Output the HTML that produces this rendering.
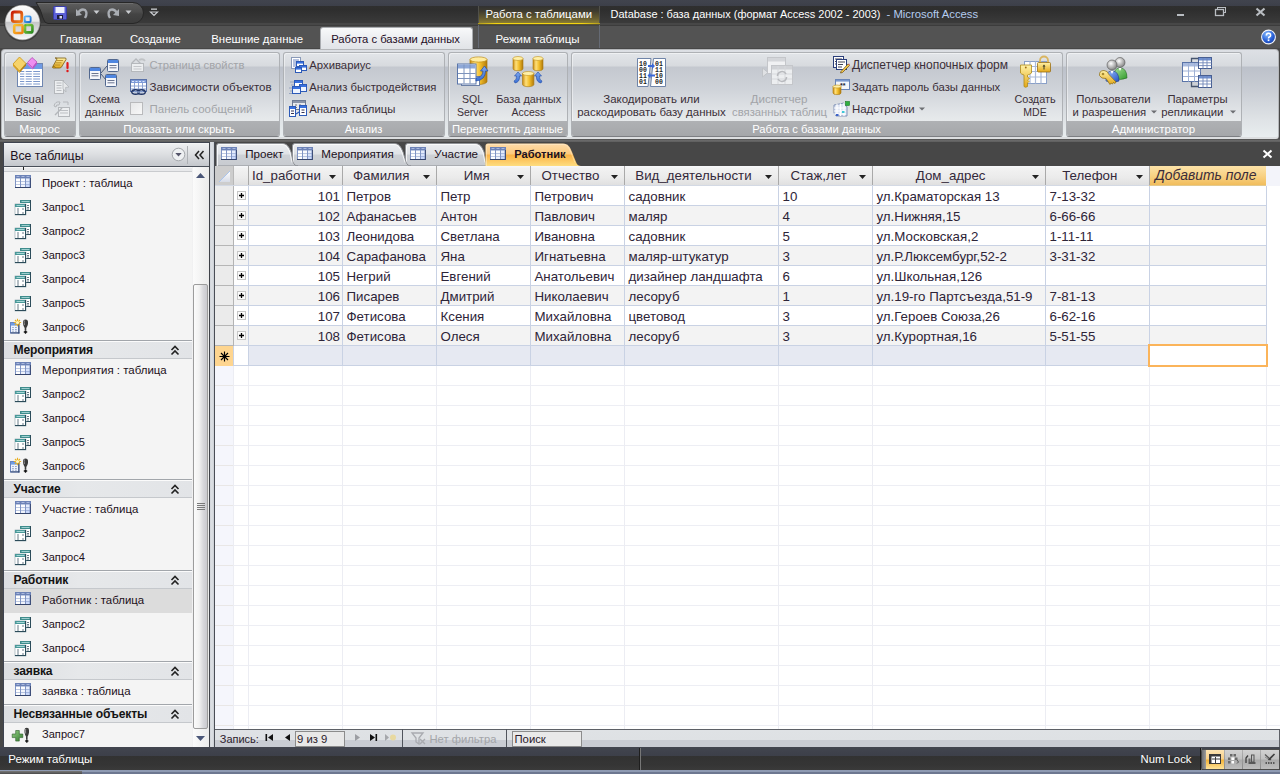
<!DOCTYPE html>
<html><head><meta charset="utf-8">
<style>
*{box-sizing:border-box;margin:0;padding:0}
html,body{width:1280px;height:774px;overflow:hidden;background:#474747;font-family:"Liberation Sans",sans-serif;font-size:11.3px;color:#3a3a3a}
.a{position:absolute;white-space:nowrap}
svg.a{overflow:visible}
</style></head><body>
<div class="a" style="left:0px;top:0px;width:1280px;height:25px;background:linear-gradient(#41444e 0,#3d404a 5.5px,#2f2f2f 6px,#2e2e2e 10px,#3a3a3a 22.5px,#474747 23px,#474747 25px)"></div>
<div class="a" style="left:0px;top:25px;width:1280px;height:24px;background:linear-gradient(#3c3c3c 0,#3c3c3c 1px,#535353 1px,#535353 23px,#474747 23px)"></div>
<div class="a" style="left:478px;top:6px;width:122px;height:18px;background:linear-gradient(#313131 0,#3e3b2e 5px,#6a6030 13px,#8a7c34 17px);border-left:1px solid #50504a;border-right:1px solid #50504a"></div>
<div class="a" style="left:478px;top:23px;width:122px;height:1px;background:linear-gradient(90deg,#b09a20,#f4d410 15%,#f4d410 85%,#b09a20)"></div>
<div class="a" style="left:478px;top:24px;width:122px;height:1px;background:#5a5430"></div>
<div class="a" style="left:478px;top:25px;width:122px;height:23px;background:linear-gradient(#454545 0,#454545 1px,#525252 1px);border-left:1px solid #656a74;border-right:1px solid #656a74"></div>
<div class="a" style="left:485.5px;top:9.40px;font-size:11.33px;line-height:11.33px;color:#fff;font-weight:400;">Работа с таблицами</div>
<div class="a" style="left:610.6px;top:8.72px;font-size:10.96px;line-height:10.96px;color:#fff;font-weight:400;">Database : база данных (формат Access 2002 - 2003)</div>
<div class="a" style="left:886.5px;top:8.51px;font-size:11.2px;line-height:11.2px;color:#b4ccef;font-weight:400;">-</div>
<div class="a" style="left:893.4px;top:9.43px;font-size:11.3px;line-height:11.3px;color:#b4ccef;font-weight:400;">Microsoft Access</div>
<div class="a" style="left:1177px;top:14px;width:7px;height:2px;background:#b9bdc2"></div>
<svg class="a" style="left:1214px;top:7px" width="13" height="10" viewBox="0 0 13 10"><rect x="3.5" y="0.5" width="8" height="5" fill="none" stroke="#b9bdc2"/><rect x="1.5" y="2.5" width="8" height="6" fill="#303030" stroke="#b9bdc2" stroke-width="1.3"/></svg>
<svg class="a" style="left:1255px;top:7px" width="11" height="10" viewBox="0 0 11 10"><path d="M1.5 1.5 L9.5 8.5 M9.5 1.5 L1.5 8.5" stroke="#b9bdc2" stroke-width="2.2"/></svg>
<svg class="a" style="left:0;top:0" width="150" height="26" viewBox="0 0 150 26"><defs><linearGradient id="qat" x1="0" y1="0" x2="0" y2="1"><stop offset="0" stop-color="#5e5e5e"/><stop offset=".45" stop-color="#4d4d4d"/><stop offset=".55" stop-color="#444"/><stop offset="1" stop-color="#3b3b3b"/></linearGradient></defs><path d="M36 2.5 H133 A10.5 10.5 0 0 1 133 23.5 H48 Q44.5 23.5 43 18 Q41 9 36 2.5Z" fill="url(#qat)" stroke="#272727" stroke-width="1"/><path d="M38 3.5 H133" stroke="#6e6e6e" stroke-width="1"/></svg>
<svg class="a" style="left:53px;top:6px" width="14" height="14" viewBox="0 0 14 14"><rect x="0.5" y="0.5" width="13" height="13" rx="1" fill="#5b5fd6" stroke="#3a3ea8"/><rect x="2.5" y="1" width="9" height="6" fill="#eef0ff"/><rect x="4" y="9" width="6" height="4" fill="#1e1e40"/><rect x="6.5" y="10" width="2.5" height="2.5" fill="#dde"/></svg>
<svg class="a" style="left:75px;top:6px" width="14" height="14" viewBox="0 0 14 14"><path d="M3 7 Q6 2 10 4 Q13 7 10 12" fill="none" stroke="#a9adb3" stroke-width="2.4"/><path d="M1 3 L1 10 L7 9 Z" fill="#a9adb3"/></svg>
<svg class="a" style="left:93px;top:10px" width="7" height="5" viewBox="0 0 7 5"><path d="M0.5 0.5 H6.5 L3.5 4 Z" fill="#c9ccd0"/></svg>
<svg class="a" style="left:106px;top:6px" width="14" height="14" viewBox="0 0 14 14"><path d="M11 7 Q8 2 4 4 Q1 7 4 12" fill="none" stroke="#a9adb3" stroke-width="2.4"/><path d="M13 3 L13 10 L7 9 Z" fill="#a9adb3"/></svg>
<svg class="a" style="left:125px;top:10px" width="7" height="5" viewBox="0 0 7 5"><path d="M0.5 0.5 H6.5 L3.5 4 Z" fill="#c9ccd0"/></svg>
<svg class="a" style="left:150px;top:8px" width="8" height="9" viewBox="0 0 8 9"><rect x="1" y="0.5" width="6" height="1.3" fill="#c9ccd0"/><path d="M0.5 4 H7.5 L4 7.5 Z" fill="none" stroke="#c9ccd0" stroke-width="1.2"/></svg>
<svg class="a" style="left:0px;top:0px" width="48" height="48" viewBox="0 0 48 48">
<defs><linearGradient id="ob" x1="0" y1="0" x2="0" y2="1"><stop offset="0" stop-color="#fcfcfc"/><stop offset=".46" stop-color="#e9e9ea"/><stop offset=".5" stop-color="#c6c7c9"/><stop offset=".75" stop-color="#dcdddf"/><stop offset="1" stop-color="#fafafa"/></linearGradient>
<linearGradient id="lr" x1="0" y1="0" x2="1" y2="1"><stop offset="0" stop-color="#c81e08"/><stop offset="1" stop-color="#f08a1a"/></linearGradient>
<linearGradient id="ly" x1="0" y1="0" x2="1" y2="1"><stop offset="0" stop-color="#f8c030"/><stop offset="1" stop-color="#f08010"/></linearGradient>
<linearGradient id="lg" x1="0" y1="0" x2="1" y2="1"><stop offset="0" stop-color="#8cd040"/><stop offset="1" stop-color="#2a8a20"/></linearGradient>
<linearGradient id="lb" x1="0" y1="0" x2="1" y2="1"><stop offset="0" stop-color="#60b8f8"/><stop offset="1" stop-color="#1a6ad0"/></linearGradient></defs>
<circle cx="22.5" cy="23" r="18.6" fill="#222" opacity=".45"/>
<circle cx="22.5" cy="22.5" r="17.8" fill="#8e8e8e"/>
<circle cx="22.5" cy="22.5" r="17" fill="url(#ob)"/>
<rect x="12.2" y="12" width="9.6" height="9.6" rx="2" fill="none" stroke="url(#lr)" stroke-width="2.8"/>
<rect x="24.6" y="16.4" width="6" height="5.6" rx="1" fill="none" stroke="url(#lb)" stroke-width="1.9"/>
<rect x="14.2" y="25" width="8.4" height="8" rx="1.5" fill="none" stroke="url(#ly)" stroke-width="2.6"/>
<rect x="25" y="25" width="7.4" height="7.4" rx="1.5" fill="none" stroke="url(#lg)" stroke-width="2.6"/>
<circle cx="21.5" cy="21.5" r="1.1" fill="#f07020"/><circle cx="25.5" cy="21.5" r="1.1" fill="#3a8ae0"/><circle cx="21.5" cy="25.3" r="1.1" fill="#f8b030"/><circle cx="25.5" cy="25.3" r="1.1" fill="#5ab030"/>
</svg>
<div class="a" style="left:60px;top:33.66px;font-size:11.03px;line-height:11.03px;color:#fff;font-weight:400;">Главная</div>
<div class="a" style="left:130px;top:34.47px;font-size:11.25px;line-height:11.25px;color:#fff;font-weight:400;">Создание</div>
<div class="a" style="left:211.25px;top:34.34px;font-size:11.41px;line-height:11.41px;color:#fff;font-weight:400;">Внешние данные</div>
<div class="a" style="left:320px;top:27px;width:153px;height:24px;border:1px solid #a9acb0;border-bottom:none;border-radius:3px 3px 0 0;background:linear-gradient(#f8f9fa,#e8eaed 60%,#dfe2e6)"></div>
<div class="a" style="left:331.25px;top:34.48px;font-size:11.24px;line-height:11.24px;color:#1e0c26;font-weight:400;">Работа с базами данных</div>
<div class="a" style="left:495.5px;top:34.28px;font-size:11.47px;line-height:11.47px;color:#fff;font-weight:400;">Режим таблицы</div>
<svg class="a" style="left:1260px;top:29px" width="17" height="17" viewBox="0 0 17 17">
<defs><radialGradient id="hb" cx="40%" cy="30%" r="75%"><stop offset="0" stop-color="#8cc0ff"/><stop offset=".6" stop-color="#2a62d8"/><stop offset="1" stop-color="#1840a8"/></radialGradient></defs>
<circle cx="8.5" cy="8" r="6.9" fill="url(#hb)" stroke="#f4f6fa" stroke-width="1.1"/>
<path d="M6.4 6.5 Q6.4 4.3 8.5 4.3 Q10.6 4.3 10.6 6.2 Q10.6 7.4 9.3 8 Q8.5 8.5 8.5 9.4" fill="none" stroke="#fff" stroke-width="1.5"/><rect x="7.7" y="10.4" width="1.7" height="1.7" fill="#fff"/>
</svg>
<div class="a" style="left:1px;top:49px;width:1278px;height:90px;border:1px solid #b5b7ba;border-bottom:2px solid #dcdee0;border-radius:4px 4px 3px 3px;background:linear-gradient(#dde0e5 0,#d3d7dd 16px,#bcc1ca 17px,#c9cdd4 40px,#dfe3e6 70px,#e9eef0 88px)"></div>
<div class="a" style="left:0px;top:139px;width:1280px;height:1px;background:#565656"></div>
<div class="a" style="left:0px;top:140px;width:1280px;height:2px;background:linear-gradient(#6c6c6c,#5e5e5e)"></div>
<div class="a" style="left:4px;top:52px;width:72px;height:85px;border:1px solid #aeb1b5;border-bottom-color:#7d7f83;border-radius:3px;background:linear-gradient(#e2e5e9 0,#d7dade 13px,#c4c8cf 14px,#ced2d8 35px,#e2e5e8 60px,#e7eaec 68px);box-shadow:inset 1px 1px 0 rgba(255,255,255,.45)"></div>
<div class="a" style="left:5px;top:121px;width:70px;height:15px;background:linear-gradient(#afb1b4,#a5a7aa);border-radius:0 0 2px 2px"></div>
<div class="a" style="left:-110.5px;width:300px;text-align:center;top:124.00px;font-size:11.81px;line-height:11.81px;color:#fff;font-weight:400;">Макрос</div>
<div class="a" style="left:79px;top:52px;width:201px;height:85px;border:1px solid #aeb1b5;border-bottom-color:#7d7f83;border-radius:3px;background:linear-gradient(#e2e5e9 0,#d7dade 13px,#c4c8cf 14px,#ced2d8 35px,#e2e5e8 60px,#e7eaec 68px);box-shadow:inset 1px 1px 0 rgba(255,255,255,.45)"></div>
<div class="a" style="left:80px;top:121px;width:199px;height:15px;background:linear-gradient(#afb1b4,#a5a7aa);border-radius:0 0 2px 2px"></div>
<div class="a" style="left:29.0px;width:300px;text-align:center;top:124.24px;font-size:11.52px;line-height:11.52px;color:#fff;font-weight:400;">Показать или скрыть</div>
<div class="a" style="left:283px;top:52px;width:162px;height:85px;border:1px solid #aeb1b5;border-bottom-color:#7d7f83;border-radius:3px;background:linear-gradient(#e2e5e9 0,#d7dade 13px,#c4c8cf 14px,#ced2d8 35px,#e2e5e8 60px,#e7eaec 68px);box-shadow:inset 1px 1px 0 rgba(255,255,255,.45)"></div>
<div class="a" style="left:284px;top:121px;width:160px;height:15px;background:linear-gradient(#afb1b4,#a5a7aa);border-radius:0 0 2px 2px"></div>
<div class="a" style="left:213.5px;width:300px;text-align:center;top:123.54px;font-size:11.17px;line-height:11.17px;color:#fff;font-weight:400;">Анализ</div>
<div class="a" style="left:448px;top:52px;width:120px;height:85px;border:1px solid #aeb1b5;border-bottom-color:#7d7f83;border-radius:3px;background:linear-gradient(#e2e5e9 0,#d7dade 13px,#c4c8cf 14px,#ced2d8 35px,#e2e5e8 60px,#e7eaec 68px);box-shadow:inset 1px 1px 0 rgba(255,255,255,.45)"></div>
<div class="a" style="left:449px;top:121px;width:118px;height:15px;background:linear-gradient(#afb1b4,#a5a7aa);border-radius:0 0 2px 2px"></div>
<div class="a" style="left:357.5px;width:300px;text-align:center;top:123.51px;font-size:11.21px;line-height:11.21px;color:#fff;font-weight:400;">Переместить данные</div>
<div class="a" style="left:571px;top:52px;width:492px;height:85px;border:1px solid #aeb1b5;border-bottom-color:#7d7f83;border-radius:3px;background:linear-gradient(#e2e5e9 0,#d7dade 13px,#c4c8cf 14px,#ced2d8 35px,#e2e5e8 60px,#e7eaec 68px);box-shadow:inset 1px 1px 0 rgba(255,255,255,.45)"></div>
<div class="a" style="left:572px;top:121px;width:490px;height:15px;background:linear-gradient(#afb1b4,#a5a7aa);border-radius:0 0 2px 2px"></div>
<div class="a" style="left:666.5px;width:300px;text-align:center;top:124.48px;font-size:11.24px;line-height:11.24px;color:#fff;font-weight:400;">Работа с базами данных</div>
<div class="a" style="left:1066px;top:52px;width:176px;height:85px;border:1px solid #aeb1b5;border-bottom-color:#7d7f83;border-radius:3px;background:linear-gradient(#e2e5e9 0,#d7dade 13px,#c4c8cf 14px,#ced2d8 35px,#e2e5e8 60px,#e7eaec 68px);box-shadow:inset 1px 1px 0 rgba(255,255,255,.45)"></div>
<div class="a" style="left:1067px;top:121px;width:174px;height:15px;background:linear-gradient(#afb1b4,#a5a7aa);border-radius:0 0 2px 2px"></div>
<div class="a" style="left:1003.5px;width:300px;text-align:center;top:124.20px;font-size:11.57px;line-height:11.57px;color:#fff;font-weight:400;">Администратор</div>
<div class="a" style="left:-121.6px;width:300px;text-align:center;top:94.37px;font-size:11.37px;line-height:11.37px;color:#3b2f38;font-weight:400;">Visual</div>
<div class="a" style="left:-121.6px;width:300px;text-align:center;top:107.08px;font-size:10.53px;line-height:10.53px;color:#3b2f38;font-weight:400;">Basic</div>
<div class="a" style="left:-46px;width:300px;text-align:center;top:94.11px;font-size:10.5px;line-height:10.5px;color:#3b2f38;font-weight:400;">Схема</div>
<div class="a" style="left:-45.400000000000006px;width:300px;text-align:center;top:107.40px;font-size:11.33px;line-height:11.33px;color:#3b2f38;font-weight:400;">данных</div>
<div class="a" style="left:149.5px;top:60.46px;font-size:11.26px;line-height:11.26px;color:#a2a4a8;font-weight:400;">Страница свойств</div>
<div class="a" style="left:149.5px;top:82.23px;font-size:11.53px;line-height:11.53px;color:#3b2f38;font-weight:400;">Зависимости объектов</div>
<div class="a" style="left:149.5px;top:104.27px;font-size:11.49px;line-height:11.49px;color:#a2a4a8;font-weight:400;">Панель сообщений</div>
<div class="a" style="left:309.3px;top:60.41px;font-size:11.32px;line-height:11.32px;color:#3b2f38;font-weight:400;">Архивариус</div>
<div class="a" style="left:309.3px;top:82.45px;font-size:11.28px;line-height:11.28px;color:#3b2f38;font-weight:400;">Анализ быстродействия</div>
<div class="a" style="left:309.3px;top:104.43px;font-size:11.3px;line-height:11.3px;color:#3b2f38;font-weight:400;">Анализ таблицы</div>
<div class="a" style="left:322.5px;width:300px;text-align:center;top:94.11px;font-size:10.5px;line-height:10.5px;color:#3b2f38;font-weight:400;">SQL</div>
<div class="a" style="left:322.5px;width:300px;text-align:center;top:107.08px;font-size:10.53px;line-height:10.53px;color:#3b2f38;font-weight:400;">Server</div>
<div class="a" style="left:378.70000000000005px;width:300px;text-align:center;top:93.76px;font-size:10.91px;line-height:10.91px;color:#3b2f38;font-weight:400;">База данных</div>
<div class="a" style="left:378.4px;width:300px;text-align:center;top:107.11px;font-size:10.5px;line-height:10.5px;color:#3b2f38;font-weight:400;">Access</div>
<div class="a" style="left:501.5px;width:300px;text-align:center;top:94.28px;font-size:11.48px;line-height:11.48px;color:#3b2f38;font-weight:400;">Закодировать или</div>
<div class="a" style="left:501.5px;width:300px;text-align:center;top:107.27px;font-size:11.49px;line-height:11.49px;color:#3b2f38;font-weight:400;">раскодировать базу данных</div>
<div class="a" style="left:629px;width:300px;text-align:center;top:93.13px;font-size:11.65px;line-height:11.65px;color:#a2a4a8;font-weight:400;">Диспетчер</div>
<div class="a" style="left:629.5px;width:300px;text-align:center;top:107.45px;font-size:11.28px;line-height:11.28px;color:#a2a4a8;font-weight:400;">связанных таблиц</div>
<div class="a" style="left:852px;top:58.82px;font-size:12.02px;line-height:12.02px;color:#3b2f38;font-weight:400;">Диспетчер кнопочных форм</div>
<div class="a" style="left:852px;top:82.42px;font-size:11.31px;line-height:11.31px;color:#3b2f38;font-weight:400;">Задать пароль базы данных</div>
<div class="a" style="left:852px;top:104.34px;font-size:11.41px;line-height:11.41px;color:#3b2f38;font-weight:400;">Надстройки</div>
<svg class="a" style="left:919px;top:107px" width="6" height="4" viewBox="0 0 6 4"><path d="M0 0.5 H6 L3 3.5Z" fill="#6d6f73"/></svg>
<div class="a" style="left:885px;width:300px;text-align:center;top:93.81px;font-size:10.85px;line-height:10.85px;color:#3b2f38;font-weight:400;">Создать</div>
<div class="a" style="left:885px;width:300px;text-align:center;top:107.11px;font-size:10.5px;line-height:10.5px;color:#3b2f38;font-weight:400;">MDE</div>
<div class="a" style="left:963.4000000000001px;width:300px;text-align:center;top:94.36px;font-size:11.38px;line-height:11.38px;color:#3b2f38;font-weight:400;">Пользователи</div>
<div class="a" style="left:1072.5px;top:107.43px;font-size:11.3px;line-height:11.3px;color:#3b2f38;font-weight:400;">и разрешения</div>
<svg class="a" style="left:1151px;top:110px" width="6" height="4" viewBox="0 0 6 4"><path d="M0 0.5 H6 L3 3.5Z" fill="#6d6f73"/></svg>
<div class="a" style="left:1047.5px;width:300px;text-align:center;top:94.46px;font-size:11.26px;line-height:11.26px;color:#3b2f38;font-weight:400;">Параметры</div>
<div class="a" style="left:1161.25px;top:107.43px;font-size:11.3px;line-height:11.3px;color:#3b2f38;font-weight:400;">репликации</div>
<svg class="a" style="left:1230px;top:110px" width="6" height="4" viewBox="0 0 6 4"><path d="M0 0.5 H6 L3 3.5Z" fill="#6d6f73"/></svg>
<div class="a" style="left:3px;top:142px;width:206px;height:606px;background:#3f4450"></div>
<div class="a" style="left:4px;top:143px;width:205px;height:604px;background:#f4f4f4"></div>
<div class="a" style="left:4px;top:143px;width:205px;height:24px;background:linear-gradient(#fafafa 0,#eeeff1 1px,#dcdee1 50%,#c4c7cc);border-bottom:1px solid #4a505a"></div>
<div class="a" style="left:10.3px;top:149.61px;font-size:12.27px;line-height:12.27px;color:#1c1020;font-weight:400;">Все таблицы</div>
<svg class="a" style="left:171px;top:147px" width="15" height="15" viewBox="0 0 15 15"><circle cx="7.5" cy="7.5" r="6.3" fill="#eef0f2" stroke="#a4a7ab" stroke-width="1"/><path d="M4.3 6 H10.7 L7.5 9.5Z" fill="#55556a"/></svg>
<div class="a" style="left:187px;top:146px;width:1px;height:18px;background:#aeb1b5"></div>
<svg class="a" style="left:194px;top:150px" width="11" height="10" viewBox="0 0 11 10"><path d="M5 1 L1.5 5 L5 9 M9.5 1 L6 5 L9.5 9" fill="none" stroke="#222" stroke-width="1.5"/></svg>
<div class="a" style="left:4px;top:167px;width:188px;height:5px;background:linear-gradient(#f8f8f8 0,#f8f8f8 1px,#e8e9eb 1px);border-bottom:1px solid #c9cbce"></div>
<div class="a" style="left:23px;top:167px;width:1px;height:3px;background:#222"></div>
<svg class="a" style="left:15px;top:175px" width="16" height="13" viewBox="0 0 16 13"><rect x="0" y="0" width="16" height="13" fill="#7f94c4"/><rect x="0" y="12" width="16" height="1" fill="#34446c"/><rect x="15" y="1" width="1" height="12" fill="#3e4f7a"/><rect x="0" y="0" width="16" height="3" fill="#6c82b6"/><path d="M1.5 1.5 H4.5 M6.5 1.5 H9.5 M11.5 1.5 H14.5" stroke="#a9b8de" stroke-width="1"/><rect x="1" y="3.5" width="4" height="2.5" fill="#fff"/><rect x="6" y="3.5" width="4" height="2.5" fill="#fafbfe"/><rect x="11" y="3.5" width="3.5" height="2.5" fill="#e4ebfb"/><rect x="1" y="6.5" width="4" height="2.5" fill="#fff"/><rect x="6" y="6.5" width="4" height="2.5" fill="#f2f5fc"/><rect x="11" y="6.5" width="3.5" height="2.5" fill="#d8e3fb"/><rect x="1" y="9.5" width="4" height="2.5" fill="#fff"/><rect x="6" y="9.5" width="4" height="2.5" fill="#eef2fb"/><rect x="11" y="9.5" width="3.5" height="2.5" fill="#c9d8fa"/></svg>
<div class="a" style="left:42px;top:178.30px;font-size:11.45px;line-height:11.45px;color:#1c1020;font-weight:400;">Проект : таблица</div>
<svg class="a" style="left:15px;top:200px" width="16" height="15" viewBox="0 0 16 15"><rect x="5" y="0" width="11" height="11" fill="#fff"/><rect x="5" y="0" width="11" height="3" fill="#3f8c8c"/><path d="M6.5 1.5 H14.5" stroke="#9fd0d0"/><rect x="15" y="0" width="1" height="11" fill="#2c4c5a"/><rect x="5" y="10" width="11" height="1" fill="#2c4c5a"/><path d="M12 5.5 H14 M12 7.5 H14 M12 9 H14" stroke="#6a7c88"/><rect x="0" y="4" width="11" height="11" fill="#fff" stroke="#8aa0a8" stroke-width=".6"/><rect x="0" y="4" width="11" height="3" fill="#4a9898"/><path d="M1.5 5.5 H9.5" stroke="#a8d8d8"/><rect x="10" y="4" width="1" height="11" fill="#2c4c5a"/><rect x="0" y="14" width="11" height="1" fill="#2c4c5a"/><path d="M2 9 H4 M2 11 H4 M2 13 H4 M7 9 H9 M7 13 H9" stroke="#6a7c88"/></svg>
<div class="a" style="left:42px;top:201.60px;font-size:11.1px;line-height:11.1px;color:#1c1020;font-weight:400;">Запрос1</div>
<svg class="a" style="left:15px;top:224px" width="16" height="15" viewBox="0 0 16 15"><rect x="5" y="0" width="11" height="11" fill="#fff"/><rect x="5" y="0" width="11" height="3" fill="#3f8c8c"/><path d="M6.5 1.5 H14.5" stroke="#9fd0d0"/><rect x="15" y="0" width="1" height="11" fill="#2c4c5a"/><rect x="5" y="10" width="11" height="1" fill="#2c4c5a"/><path d="M12 5.5 H14 M12 7.5 H14 M12 9 H14" stroke="#6a7c88"/><rect x="0" y="4" width="11" height="11" fill="#fff" stroke="#8aa0a8" stroke-width=".6"/><rect x="0" y="4" width="11" height="3" fill="#4a9898"/><path d="M1.5 5.5 H9.5" stroke="#a8d8d8"/><rect x="10" y="4" width="1" height="11" fill="#2c4c5a"/><rect x="0" y="14" width="11" height="1" fill="#2c4c5a"/><path d="M2 9 H4 M2 11 H4 M2 13 H4 M7 9 H9 M7 13 H9" stroke="#6a7c88"/></svg>
<div class="a" style="left:42px;top:225.60px;font-size:11.1px;line-height:11.1px;color:#1c1020;font-weight:400;">Запрос2</div>
<svg class="a" style="left:15px;top:248px" width="16" height="15" viewBox="0 0 16 15"><rect x="5" y="0" width="11" height="11" fill="#fff"/><rect x="5" y="0" width="11" height="3" fill="#3f8c8c"/><path d="M6.5 1.5 H14.5" stroke="#9fd0d0"/><rect x="15" y="0" width="1" height="11" fill="#2c4c5a"/><rect x="5" y="10" width="11" height="1" fill="#2c4c5a"/><path d="M12 5.5 H14 M12 7.5 H14 M12 9 H14" stroke="#6a7c88"/><rect x="0" y="4" width="11" height="11" fill="#fff" stroke="#8aa0a8" stroke-width=".6"/><rect x="0" y="4" width="11" height="3" fill="#4a9898"/><path d="M1.5 5.5 H9.5" stroke="#a8d8d8"/><rect x="10" y="4" width="1" height="11" fill="#2c4c5a"/><rect x="0" y="14" width="11" height="1" fill="#2c4c5a"/><path d="M2 9 H4 M2 11 H4 M2 13 H4 M7 9 H9 M7 13 H9" stroke="#6a7c88"/></svg>
<div class="a" style="left:42px;top:249.60px;font-size:11.1px;line-height:11.1px;color:#1c1020;font-weight:400;">Запрос3</div>
<svg class="a" style="left:15px;top:272px" width="16" height="15" viewBox="0 0 16 15"><rect x="5" y="0" width="11" height="11" fill="#fff"/><rect x="5" y="0" width="11" height="3" fill="#3f8c8c"/><path d="M6.5 1.5 H14.5" stroke="#9fd0d0"/><rect x="15" y="0" width="1" height="11" fill="#2c4c5a"/><rect x="5" y="10" width="11" height="1" fill="#2c4c5a"/><path d="M12 5.5 H14 M12 7.5 H14 M12 9 H14" stroke="#6a7c88"/><rect x="0" y="4" width="11" height="11" fill="#fff" stroke="#8aa0a8" stroke-width=".6"/><rect x="0" y="4" width="11" height="3" fill="#4a9898"/><path d="M1.5 5.5 H9.5" stroke="#a8d8d8"/><rect x="10" y="4" width="1" height="11" fill="#2c4c5a"/><rect x="0" y="14" width="11" height="1" fill="#2c4c5a"/><path d="M2 9 H4 M2 11 H4 M2 13 H4 M7 9 H9 M7 13 H9" stroke="#6a7c88"/></svg>
<div class="a" style="left:42px;top:273.60px;font-size:11.1px;line-height:11.1px;color:#1c1020;font-weight:400;">Запрос4</div>
<svg class="a" style="left:15px;top:296px" width="16" height="15" viewBox="0 0 16 15"><rect x="5" y="0" width="11" height="11" fill="#fff"/><rect x="5" y="0" width="11" height="3" fill="#3f8c8c"/><path d="M6.5 1.5 H14.5" stroke="#9fd0d0"/><rect x="15" y="0" width="1" height="11" fill="#2c4c5a"/><rect x="5" y="10" width="11" height="1" fill="#2c4c5a"/><path d="M12 5.5 H14 M12 7.5 H14 M12 9 H14" stroke="#6a7c88"/><rect x="0" y="4" width="11" height="11" fill="#fff" stroke="#8aa0a8" stroke-width=".6"/><rect x="0" y="4" width="11" height="3" fill="#4a9898"/><path d="M1.5 5.5 H9.5" stroke="#a8d8d8"/><rect x="10" y="4" width="1" height="11" fill="#2c4c5a"/><rect x="0" y="14" width="11" height="1" fill="#2c4c5a"/><path d="M2 9 H4 M2 11 H4 M2 13 H4 M7 9 H9 M7 13 H9" stroke="#6a7c88"/></svg>
<div class="a" style="left:42px;top:297.60px;font-size:11.1px;line-height:11.1px;color:#1c1020;font-weight:400;">Запрос5</div>
<svg class="a" style="left:10px;top:318px" width="20" height="16" viewBox="0 0 20 16"><rect x="0.5" y="4.5" width="8.5" height="10.5" fill="#eef3fc" stroke="#6a86c0" stroke-width="1"/><rect x="1" y="5" width="7.5" height="2.6" fill="#6d9ce6"/><rect x="8.3" y="5" width="1" height="10.5" fill="#34466e"/><rect x="0.5" y="14.4" width="9" height="1" fill="#34466e"/><path d="M2.2 9.5 H3.8 M5 9.5 H6.8 M2.2 11.5 H3.8 M5 11.5 H6.8 M2.2 13.2 H3.8 M5 13.2 H6.8" stroke="#95a6c8"/><g stroke="#eab020" stroke-width="1.1"><path d="M7.5 0.8 V8.2 M3.9 4.5 H11.1 M5 2 L10 7 M10 2 L5 7"/></g><circle cx="7.5" cy="4.5" r="1.6" fill="#fff6c0"/><path d="M13 4 Q13 1.5 15.5 1.5 Q18 1.5 18 4 V6 Q17.5 8.5 16.3 10 V12.5 H14.7 V10 Q13.5 8.5 13 6Z" fill="#3a3a3a"/><path d="M14.3 2.5 Q14 4 14.3 7" stroke="#9a9a9a" stroke-width="1"/><path d="M13.8 14 H17.2 M15.5 12.5 V15.8" stroke="#111" stroke-width="1.3"/></svg>
<div class="a" style="left:42px;top:321.60px;font-size:11.1px;line-height:11.1px;color:#1c1020;font-weight:400;">Запрос6</div>
<div class="a" style="left:4px;top:340px;width:188px;height:1px;background:#a2a6ab"></div>
<div class="a" style="left:4px;top:341px;width:188px;height:1px;background:#fbfbfb"></div>
<div class="a" style="left:4px;top:342px;width:188px;height:17px;background:linear-gradient(90deg,#dcdee1,#e6e8ea 40%,#e2e4e7);border-bottom:1px solid #c5c8cc"></div>
<div class="a" style="left:13.5px;top:343.75px;font-size:12.1px;line-height:12.1px;color:#141414;font-weight:700;letter-spacing:-0.15px;">Мероприятия</div>
<svg class="a" style="left:170px;top:345px" width="10" height="11" viewBox="0 0 10 11"><path d="M1.5 5 L5 1.5 L8.5 5 M1.5 9.5 L5 6 L8.5 9.5" fill="none" stroke="#222" stroke-width="1.6"/></svg>
<svg class="a" style="left:15px;top:362px" width="16" height="13" viewBox="0 0 16 13"><rect x="0" y="0" width="16" height="13" fill="#7f94c4"/><rect x="0" y="12" width="16" height="1" fill="#34446c"/><rect x="15" y="1" width="1" height="12" fill="#3e4f7a"/><rect x="0" y="0" width="16" height="3" fill="#6c82b6"/><path d="M1.5 1.5 H4.5 M6.5 1.5 H9.5 M11.5 1.5 H14.5" stroke="#a9b8de" stroke-width="1"/><rect x="1" y="3.5" width="4" height="2.5" fill="#fff"/><rect x="6" y="3.5" width="4" height="2.5" fill="#fafbfe"/><rect x="11" y="3.5" width="3.5" height="2.5" fill="#e4ebfb"/><rect x="1" y="6.5" width="4" height="2.5" fill="#fff"/><rect x="6" y="6.5" width="4" height="2.5" fill="#f2f5fc"/><rect x="11" y="6.5" width="3.5" height="2.5" fill="#d8e3fb"/><rect x="1" y="9.5" width="4" height="2.5" fill="#fff"/><rect x="6" y="9.5" width="4" height="2.5" fill="#eef2fb"/><rect x="11" y="9.5" width="3.5" height="2.5" fill="#c9d8fa"/></svg>
<div class="a" style="left:42px;top:365.30px;font-size:11.45px;line-height:11.45px;color:#1c1020;font-weight:400;">Мероприятия : таблица</div>
<svg class="a" style="left:15px;top:387px" width="16" height="15" viewBox="0 0 16 15"><rect x="5" y="0" width="11" height="11" fill="#fff"/><rect x="5" y="0" width="11" height="3" fill="#3f8c8c"/><path d="M6.5 1.5 H14.5" stroke="#9fd0d0"/><rect x="15" y="0" width="1" height="11" fill="#2c4c5a"/><rect x="5" y="10" width="11" height="1" fill="#2c4c5a"/><path d="M12 5.5 H14 M12 7.5 H14 M12 9 H14" stroke="#6a7c88"/><rect x="0" y="4" width="11" height="11" fill="#fff" stroke="#8aa0a8" stroke-width=".6"/><rect x="0" y="4" width="11" height="3" fill="#4a9898"/><path d="M1.5 5.5 H9.5" stroke="#a8d8d8"/><rect x="10" y="4" width="1" height="11" fill="#2c4c5a"/><rect x="0" y="14" width="11" height="1" fill="#2c4c5a"/><path d="M2 9 H4 M2 11 H4 M2 13 H4 M7 9 H9 M7 13 H9" stroke="#6a7c88"/></svg>
<div class="a" style="left:42px;top:388.60px;font-size:11.1px;line-height:11.1px;color:#1c1020;font-weight:400;">Запрос2</div>
<svg class="a" style="left:15px;top:411px" width="16" height="15" viewBox="0 0 16 15"><rect x="5" y="0" width="11" height="11" fill="#fff"/><rect x="5" y="0" width="11" height="3" fill="#3f8c8c"/><path d="M6.5 1.5 H14.5" stroke="#9fd0d0"/><rect x="15" y="0" width="1" height="11" fill="#2c4c5a"/><rect x="5" y="10" width="11" height="1" fill="#2c4c5a"/><path d="M12 5.5 H14 M12 7.5 H14 M12 9 H14" stroke="#6a7c88"/><rect x="0" y="4" width="11" height="11" fill="#fff" stroke="#8aa0a8" stroke-width=".6"/><rect x="0" y="4" width="11" height="3" fill="#4a9898"/><path d="M1.5 5.5 H9.5" stroke="#a8d8d8"/><rect x="10" y="4" width="1" height="11" fill="#2c4c5a"/><rect x="0" y="14" width="11" height="1" fill="#2c4c5a"/><path d="M2 9 H4 M2 11 H4 M2 13 H4 M7 9 H9 M7 13 H9" stroke="#6a7c88"/></svg>
<div class="a" style="left:42px;top:412.60px;font-size:11.1px;line-height:11.1px;color:#1c1020;font-weight:400;">Запрос4</div>
<svg class="a" style="left:15px;top:435px" width="16" height="15" viewBox="0 0 16 15"><rect x="5" y="0" width="11" height="11" fill="#fff"/><rect x="5" y="0" width="11" height="3" fill="#3f8c8c"/><path d="M6.5 1.5 H14.5" stroke="#9fd0d0"/><rect x="15" y="0" width="1" height="11" fill="#2c4c5a"/><rect x="5" y="10" width="11" height="1" fill="#2c4c5a"/><path d="M12 5.5 H14 M12 7.5 H14 M12 9 H14" stroke="#6a7c88"/><rect x="0" y="4" width="11" height="11" fill="#fff" stroke="#8aa0a8" stroke-width=".6"/><rect x="0" y="4" width="11" height="3" fill="#4a9898"/><path d="M1.5 5.5 H9.5" stroke="#a8d8d8"/><rect x="10" y="4" width="1" height="11" fill="#2c4c5a"/><rect x="0" y="14" width="11" height="1" fill="#2c4c5a"/><path d="M2 9 H4 M2 11 H4 M2 13 H4 M7 9 H9 M7 13 H9" stroke="#6a7c88"/></svg>
<div class="a" style="left:42px;top:436.60px;font-size:11.1px;line-height:11.1px;color:#1c1020;font-weight:400;">Запрос5</div>
<svg class="a" style="left:10px;top:457px" width="20" height="16" viewBox="0 0 20 16"><rect x="0.5" y="4.5" width="8.5" height="10.5" fill="#eef3fc" stroke="#6a86c0" stroke-width="1"/><rect x="1" y="5" width="7.5" height="2.6" fill="#6d9ce6"/><rect x="8.3" y="5" width="1" height="10.5" fill="#34466e"/><rect x="0.5" y="14.4" width="9" height="1" fill="#34466e"/><path d="M2.2 9.5 H3.8 M5 9.5 H6.8 M2.2 11.5 H3.8 M5 11.5 H6.8 M2.2 13.2 H3.8 M5 13.2 H6.8" stroke="#95a6c8"/><g stroke="#eab020" stroke-width="1.1"><path d="M7.5 0.8 V8.2 M3.9 4.5 H11.1 M5 2 L10 7 M10 2 L5 7"/></g><circle cx="7.5" cy="4.5" r="1.6" fill="#fff6c0"/><path d="M13 4 Q13 1.5 15.5 1.5 Q18 1.5 18 4 V6 Q17.5 8.5 16.3 10 V12.5 H14.7 V10 Q13.5 8.5 13 6Z" fill="#3a3a3a"/><path d="M14.3 2.5 Q14 4 14.3 7" stroke="#9a9a9a" stroke-width="1"/><path d="M13.8 14 H17.2 M15.5 12.5 V15.8" stroke="#111" stroke-width="1.3"/></svg>
<div class="a" style="left:42px;top:460.60px;font-size:11.1px;line-height:11.1px;color:#1c1020;font-weight:400;">Запрос6</div>
<div class="a" style="left:4px;top:479px;width:188px;height:1px;background:#a2a6ab"></div>
<div class="a" style="left:4px;top:480px;width:188px;height:1px;background:#fbfbfb"></div>
<div class="a" style="left:4px;top:481px;width:188px;height:17px;background:linear-gradient(90deg,#dcdee1,#e6e8ea 40%,#e2e4e7);border-bottom:1px solid #c5c8cc"></div>
<div class="a" style="left:13.5px;top:482.75px;font-size:12.1px;line-height:12.1px;color:#141414;font-weight:700;letter-spacing:-0.15px;">Участие</div>
<svg class="a" style="left:170px;top:484px" width="10" height="11" viewBox="0 0 10 11"><path d="M1.5 5 L5 1.5 L8.5 5 M1.5 9.5 L5 6 L8.5 9.5" fill="none" stroke="#222" stroke-width="1.6"/></svg>
<svg class="a" style="left:15px;top:501px" width="16" height="13" viewBox="0 0 16 13"><rect x="0" y="0" width="16" height="13" fill="#7f94c4"/><rect x="0" y="12" width="16" height="1" fill="#34446c"/><rect x="15" y="1" width="1" height="12" fill="#3e4f7a"/><rect x="0" y="0" width="16" height="3" fill="#6c82b6"/><path d="M1.5 1.5 H4.5 M6.5 1.5 H9.5 M11.5 1.5 H14.5" stroke="#a9b8de" stroke-width="1"/><rect x="1" y="3.5" width="4" height="2.5" fill="#fff"/><rect x="6" y="3.5" width="4" height="2.5" fill="#fafbfe"/><rect x="11" y="3.5" width="3.5" height="2.5" fill="#e4ebfb"/><rect x="1" y="6.5" width="4" height="2.5" fill="#fff"/><rect x="6" y="6.5" width="4" height="2.5" fill="#f2f5fc"/><rect x="11" y="6.5" width="3.5" height="2.5" fill="#d8e3fb"/><rect x="1" y="9.5" width="4" height="2.5" fill="#fff"/><rect x="6" y="9.5" width="4" height="2.5" fill="#eef2fb"/><rect x="11" y="9.5" width="3.5" height="2.5" fill="#c9d8fa"/></svg>
<div class="a" style="left:42px;top:504.30px;font-size:11.45px;line-height:11.45px;color:#1c1020;font-weight:400;">Участие : таблица</div>
<svg class="a" style="left:15px;top:526px" width="16" height="15" viewBox="0 0 16 15"><rect x="5" y="0" width="11" height="11" fill="#fff"/><rect x="5" y="0" width="11" height="3" fill="#3f8c8c"/><path d="M6.5 1.5 H14.5" stroke="#9fd0d0"/><rect x="15" y="0" width="1" height="11" fill="#2c4c5a"/><rect x="5" y="10" width="11" height="1" fill="#2c4c5a"/><path d="M12 5.5 H14 M12 7.5 H14 M12 9 H14" stroke="#6a7c88"/><rect x="0" y="4" width="11" height="11" fill="#fff" stroke="#8aa0a8" stroke-width=".6"/><rect x="0" y="4" width="11" height="3" fill="#4a9898"/><path d="M1.5 5.5 H9.5" stroke="#a8d8d8"/><rect x="10" y="4" width="1" height="11" fill="#2c4c5a"/><rect x="0" y="14" width="11" height="1" fill="#2c4c5a"/><path d="M2 9 H4 M2 11 H4 M2 13 H4 M7 9 H9 M7 13 H9" stroke="#6a7c88"/></svg>
<div class="a" style="left:42px;top:527.60px;font-size:11.1px;line-height:11.1px;color:#1c1020;font-weight:400;">Запрос2</div>
<svg class="a" style="left:15px;top:550px" width="16" height="15" viewBox="0 0 16 15"><rect x="5" y="0" width="11" height="11" fill="#fff"/><rect x="5" y="0" width="11" height="3" fill="#3f8c8c"/><path d="M6.5 1.5 H14.5" stroke="#9fd0d0"/><rect x="15" y="0" width="1" height="11" fill="#2c4c5a"/><rect x="5" y="10" width="11" height="1" fill="#2c4c5a"/><path d="M12 5.5 H14 M12 7.5 H14 M12 9 H14" stroke="#6a7c88"/><rect x="0" y="4" width="11" height="11" fill="#fff" stroke="#8aa0a8" stroke-width=".6"/><rect x="0" y="4" width="11" height="3" fill="#4a9898"/><path d="M1.5 5.5 H9.5" stroke="#a8d8d8"/><rect x="10" y="4" width="1" height="11" fill="#2c4c5a"/><rect x="0" y="14" width="11" height="1" fill="#2c4c5a"/><path d="M2 9 H4 M2 11 H4 M2 13 H4 M7 9 H9 M7 13 H9" stroke="#6a7c88"/></svg>
<div class="a" style="left:42px;top:551.60px;font-size:11.1px;line-height:11.1px;color:#1c1020;font-weight:400;">Запрос4</div>
<div class="a" style="left:4px;top:570px;width:188px;height:1px;background:#a2a6ab"></div>
<div class="a" style="left:4px;top:571px;width:188px;height:1px;background:#fbfbfb"></div>
<div class="a" style="left:4px;top:572px;width:188px;height:17px;background:linear-gradient(90deg,#dcdee1,#e6e8ea 40%,#e2e4e7);border-bottom:1px solid #c5c8cc"></div>
<div class="a" style="left:13.5px;top:573.75px;font-size:12.1px;line-height:12.1px;color:#141414;font-weight:700;letter-spacing:-0.15px;">Работник</div>
<svg class="a" style="left:170px;top:575px" width="10" height="11" viewBox="0 0 10 11"><path d="M1.5 5 L5 1.5 L8.5 5 M1.5 9.5 L5 6 L8.5 9.5" fill="none" stroke="#222" stroke-width="1.6"/></svg>
<div class="a" style="left:4px;top:589px;width:188px;height:24px;background:#dcdcdc"></div>
<svg class="a" style="left:15px;top:592px" width="16" height="13" viewBox="0 0 16 13"><rect x="0" y="0" width="16" height="13" fill="#7f94c4"/><rect x="0" y="12" width="16" height="1" fill="#34446c"/><rect x="15" y="1" width="1" height="12" fill="#3e4f7a"/><rect x="0" y="0" width="16" height="3" fill="#6c82b6"/><path d="M1.5 1.5 H4.5 M6.5 1.5 H9.5 M11.5 1.5 H14.5" stroke="#a9b8de" stroke-width="1"/><rect x="1" y="3.5" width="4" height="2.5" fill="#fff"/><rect x="6" y="3.5" width="4" height="2.5" fill="#fafbfe"/><rect x="11" y="3.5" width="3.5" height="2.5" fill="#e4ebfb"/><rect x="1" y="6.5" width="4" height="2.5" fill="#fff"/><rect x="6" y="6.5" width="4" height="2.5" fill="#f2f5fc"/><rect x="11" y="6.5" width="3.5" height="2.5" fill="#d8e3fb"/><rect x="1" y="9.5" width="4" height="2.5" fill="#fff"/><rect x="6" y="9.5" width="4" height="2.5" fill="#eef2fb"/><rect x="11" y="9.5" width="3.5" height="2.5" fill="#c9d8fa"/></svg>
<div class="a" style="left:42px;top:595.30px;font-size:11.45px;line-height:11.45px;color:#1c1020;font-weight:400;">Работник : таблица</div>
<svg class="a" style="left:15px;top:617px" width="16" height="15" viewBox="0 0 16 15"><rect x="5" y="0" width="11" height="11" fill="#fff"/><rect x="5" y="0" width="11" height="3" fill="#3f8c8c"/><path d="M6.5 1.5 H14.5" stroke="#9fd0d0"/><rect x="15" y="0" width="1" height="11" fill="#2c4c5a"/><rect x="5" y="10" width="11" height="1" fill="#2c4c5a"/><path d="M12 5.5 H14 M12 7.5 H14 M12 9 H14" stroke="#6a7c88"/><rect x="0" y="4" width="11" height="11" fill="#fff" stroke="#8aa0a8" stroke-width=".6"/><rect x="0" y="4" width="11" height="3" fill="#4a9898"/><path d="M1.5 5.5 H9.5" stroke="#a8d8d8"/><rect x="10" y="4" width="1" height="11" fill="#2c4c5a"/><rect x="0" y="14" width="11" height="1" fill="#2c4c5a"/><path d="M2 9 H4 M2 11 H4 M2 13 H4 M7 9 H9 M7 13 H9" stroke="#6a7c88"/></svg>
<div class="a" style="left:42px;top:618.60px;font-size:11.1px;line-height:11.1px;color:#1c1020;font-weight:400;">Запрос2</div>
<svg class="a" style="left:15px;top:641px" width="16" height="15" viewBox="0 0 16 15"><rect x="5" y="0" width="11" height="11" fill="#fff"/><rect x="5" y="0" width="11" height="3" fill="#3f8c8c"/><path d="M6.5 1.5 H14.5" stroke="#9fd0d0"/><rect x="15" y="0" width="1" height="11" fill="#2c4c5a"/><rect x="5" y="10" width="11" height="1" fill="#2c4c5a"/><path d="M12 5.5 H14 M12 7.5 H14 M12 9 H14" stroke="#6a7c88"/><rect x="0" y="4" width="11" height="11" fill="#fff" stroke="#8aa0a8" stroke-width=".6"/><rect x="0" y="4" width="11" height="3" fill="#4a9898"/><path d="M1.5 5.5 H9.5" stroke="#a8d8d8"/><rect x="10" y="4" width="1" height="11" fill="#2c4c5a"/><rect x="0" y="14" width="11" height="1" fill="#2c4c5a"/><path d="M2 9 H4 M2 11 H4 M2 13 H4 M7 9 H9 M7 13 H9" stroke="#6a7c88"/></svg>
<div class="a" style="left:42px;top:642.60px;font-size:11.1px;line-height:11.1px;color:#1c1020;font-weight:400;">Запрос4</div>
<div class="a" style="left:4px;top:661px;width:188px;height:1px;background:#a2a6ab"></div>
<div class="a" style="left:4px;top:662px;width:188px;height:1px;background:#fbfbfb"></div>
<div class="a" style="left:4px;top:663px;width:188px;height:17px;background:linear-gradient(90deg,#dcdee1,#e6e8ea 40%,#e2e4e7);border-bottom:1px solid #c5c8cc"></div>
<div class="a" style="left:13.5px;top:664.75px;font-size:12.1px;line-height:12.1px;color:#141414;font-weight:700;letter-spacing:-0.15px;">заявка</div>
<svg class="a" style="left:170px;top:666px" width="10" height="11" viewBox="0 0 10 11"><path d="M1.5 5 L5 1.5 L8.5 5 M1.5 9.5 L5 6 L8.5 9.5" fill="none" stroke="#222" stroke-width="1.6"/></svg>
<svg class="a" style="left:15px;top:683px" width="16" height="13" viewBox="0 0 16 13"><rect x="0" y="0" width="16" height="13" fill="#7f94c4"/><rect x="0" y="12" width="16" height="1" fill="#34446c"/><rect x="15" y="1" width="1" height="12" fill="#3e4f7a"/><rect x="0" y="0" width="16" height="3" fill="#6c82b6"/><path d="M1.5 1.5 H4.5 M6.5 1.5 H9.5 M11.5 1.5 H14.5" stroke="#a9b8de" stroke-width="1"/><rect x="1" y="3.5" width="4" height="2.5" fill="#fff"/><rect x="6" y="3.5" width="4" height="2.5" fill="#fafbfe"/><rect x="11" y="3.5" width="3.5" height="2.5" fill="#e4ebfb"/><rect x="1" y="6.5" width="4" height="2.5" fill="#fff"/><rect x="6" y="6.5" width="4" height="2.5" fill="#f2f5fc"/><rect x="11" y="6.5" width="3.5" height="2.5" fill="#d8e3fb"/><rect x="1" y="9.5" width="4" height="2.5" fill="#fff"/><rect x="6" y="9.5" width="4" height="2.5" fill="#eef2fb"/><rect x="11" y="9.5" width="3.5" height="2.5" fill="#c9d8fa"/></svg>
<div class="a" style="left:42px;top:686.30px;font-size:11.45px;line-height:11.45px;color:#1c1020;font-weight:400;">заявка : таблица</div>
<div class="a" style="left:4px;top:704px;width:188px;height:1px;background:#a2a6ab"></div>
<div class="a" style="left:4px;top:705px;width:188px;height:1px;background:#fbfbfb"></div>
<div class="a" style="left:4px;top:706px;width:188px;height:17px;background:linear-gradient(90deg,#dcdee1,#e6e8ea 40%,#e2e4e7);border-bottom:1px solid #c5c8cc"></div>
<div class="a" style="left:13.5px;top:707.75px;font-size:12.1px;line-height:12.1px;color:#141414;font-weight:700;letter-spacing:-0.15px;">Несвязанные объекты</div>
<svg class="a" style="left:170px;top:709px" width="10" height="11" viewBox="0 0 10 11"><path d="M1.5 5 L5 1.5 L8.5 5 M1.5 9.5 L5 6 L8.5 9.5" fill="none" stroke="#222" stroke-width="1.6"/></svg>
<svg class="a" style="left:11.5px;top:727px" width="20" height="16" viewBox="0 0 20 16"><defs><linearGradient id="gpl" x1="0" y1="0" x2="1" y2="1"><stop offset="0" stop-color="#9ad08a"/><stop offset="1" stop-color="#2e7a2a"/></linearGradient></defs><path d="M3.7 3.5 H7.3 V7 H10.8 V10.6 H7.3 V14.1 H3.7 V10.6 H0.2 V7 H3.7Z" fill="url(#gpl)" stroke="#2a5a28" stroke-width=".6"/><path d="M12.5 3 Q12.5 0.8 14.8 0.8 Q17 0.8 17 3 V5.5 Q16.6 8 15.6 9.5 V12.5 H14 V9.5 Q13 8 12.5 5.5Z" fill="#3a3a3a"/><path d="M13.7 2 Q13.4 3.5 13.7 6.5" stroke="#9a9a9a" stroke-width="1"/><path d="M13.2 14 H16.4 M14.8 12.5 V15.8" stroke="#111" stroke-width="1.3"/></svg>
<div class="a" style="left:42px;top:728.60px;font-size:11.1px;line-height:11.1px;color:#1c1020;font-weight:400;">Запрос7</div>
<div class="a" style="left:192px;top:167px;width:17px;height:580px;background:linear-gradient(90deg,#e6e6e8 0,#fbfbfb 1px,#f7f7f7 5px,#ebebeb 17px)"></div>
<svg class="a" style="left:195px;top:172px" width="11" height="7" viewBox="0 0 11 7"><path d="M1 6 L5.5 1 L10 6Z" fill="#4a5678"/></svg>
<svg class="a" style="left:195px;top:735px" width="11" height="7" viewBox="0 0 11 7"><path d="M1 1 L5.5 6 L10 1Z" fill="#4a5678"/></svg>
<div class="a" style="left:193px;top:284px;width:15px;height:445px;border:1px solid #9c9c9c;border-radius:2px;background:linear-gradient(90deg,#fbfbfb,#f1f1f1 40%,#d8d8dc 70%,#c9c9ce)"></div>
<div class="a" style="left:197px;top:503px;width:8px;height:1px;background:#7a7a7a"></div>
<div class="a" style="left:197px;top:505px;width:8px;height:1px;background:#7a7a7a"></div>
<div class="a" style="left:197px;top:507px;width:8px;height:1px;background:#7a7a7a"></div>
<div class="a" style="left:197px;top:509px;width:8px;height:1px;background:#7a7a7a"></div>
<div class="a" style="left:209px;top:142px;width:6px;height:606px;background:linear-gradient(90deg,#3f4249 0,#3f4249 1px,#d2d6dc 1px,#dee1e5 3px,#c9cdd3 5px,#4a4e56 5px,#4a4e56 6px)"></div>
<div class="a" style="left:0px;top:142px;width:3px;height:606px;background:#474747"></div>
<div class="a" style="left:215px;top:142px;width:1065px;height:24px;background:#474747"></div>
<svg class="a" style="left:405px;top:143px" width="87" height="23" viewBox="0 0 87 23"><defs><linearGradient id="tn" x1="0" y1="0" x2="0" y2="1"><stop offset="0" stop-color="#eceef1"/><stop offset=".48" stop-color="#dfe2e6"/><stop offset=".5" stop-color="#cdd1d6"/><stop offset="1" stop-color="#c8cbd0"/></linearGradient></defs><path d="M0.5 23 V3 Q0.5 0.5 3 0.5 H70 C75 0.5 77 4 79 9 L81 19 C82 22 84 23 86 23Z" fill="url(#tn)" stroke="#8e9196" stroke-width="1"/><path d="M1.5 23 V3.5 Q1.5 1.5 3.5 1.5 H70 C74 1.5 76 5 78 9.5 L80 19.5" fill="none" stroke="rgba(255,255,255,.75)" stroke-width="1"/></svg>
<svg class="a" style="left:410px;top:147px" width="16" height="13" viewBox="0 0 16 13"><rect x="0" y="0" width="16" height="13" fill="#7f94c4"/><rect x="0" y="12" width="16" height="1" fill="#34446c"/><rect x="15" y="1" width="1" height="12" fill="#3e4f7a"/><rect x="0" y="0" width="16" height="3" fill="#6c82b6"/><path d="M1.5 1.5 H4.5 M6.5 1.5 H9.5 M11.5 1.5 H14.5" stroke="#a9b8de" stroke-width="1"/><rect x="1" y="3.5" width="4" height="2.5" fill="#fff"/><rect x="6" y="3.5" width="4" height="2.5" fill="#fafbfe"/><rect x="11" y="3.5" width="3.5" height="2.5" fill="#e4ebfb"/><rect x="1" y="6.5" width="4" height="2.5" fill="#fff"/><rect x="6" y="6.5" width="4" height="2.5" fill="#f2f5fc"/><rect x="11" y="6.5" width="3.5" height="2.5" fill="#d8e3fb"/><rect x="1" y="9.5" width="4" height="2.5" fill="#fff"/><rect x="6" y="9.5" width="4" height="2.5" fill="#eef2fb"/><rect x="11" y="9.5" width="3.5" height="2.5" fill="#c9d8fa"/></svg>
<div class="a" style="left:434.2px;top:148.17px;font-size:11.6px;line-height:11.6px;color:#1c1020;font-weight:400;">Участие</div>
<svg class="a" style="left:292px;top:143px" width="120" height="23" viewBox="0 0 120 23"><defs><linearGradient id="tn" x1="0" y1="0" x2="0" y2="1"><stop offset="0" stop-color="#eceef1"/><stop offset=".48" stop-color="#dfe2e6"/><stop offset=".5" stop-color="#cdd1d6"/><stop offset="1" stop-color="#c8cbd0"/></linearGradient></defs><path d="M0.5 23 V3 Q0.5 0.5 3 0.5 H102 C107 0.5 109 4 111 9 L114 19 C115 22 117 23 119 23Z" fill="url(#tn)" stroke="#8e9196" stroke-width="1"/><path d="M1.5 23 V3.5 Q1.5 1.5 3.5 1.5 H102 C106 1.5 108 5 110 9.5 L113 19.5" fill="none" stroke="rgba(255,255,255,.75)" stroke-width="1"/></svg>
<svg class="a" style="left:297px;top:147px" width="16" height="13" viewBox="0 0 16 13"><rect x="0" y="0" width="16" height="13" fill="#7f94c4"/><rect x="0" y="12" width="16" height="1" fill="#34446c"/><rect x="15" y="1" width="1" height="12" fill="#3e4f7a"/><rect x="0" y="0" width="16" height="3" fill="#6c82b6"/><path d="M1.5 1.5 H4.5 M6.5 1.5 H9.5 M11.5 1.5 H14.5" stroke="#a9b8de" stroke-width="1"/><rect x="1" y="3.5" width="4" height="2.5" fill="#fff"/><rect x="6" y="3.5" width="4" height="2.5" fill="#fafbfe"/><rect x="11" y="3.5" width="3.5" height="2.5" fill="#e4ebfb"/><rect x="1" y="6.5" width="4" height="2.5" fill="#fff"/><rect x="6" y="6.5" width="4" height="2.5" fill="#f2f5fc"/><rect x="11" y="6.5" width="3.5" height="2.5" fill="#d8e3fb"/><rect x="1" y="9.5" width="4" height="2.5" fill="#fff"/><rect x="6" y="9.5" width="4" height="2.5" fill="#eef2fb"/><rect x="11" y="9.5" width="3.5" height="2.5" fill="#c9d8fa"/></svg>
<div class="a" style="left:321.2px;top:148.17px;font-size:11.6px;line-height:11.6px;color:#1c1020;font-weight:400;">Мероприятия</div>
<svg class="a" style="left:216px;top:143px" width="83" height="23" viewBox="0 0 83 23"><defs><linearGradient id="tn" x1="0" y1="0" x2="0" y2="1"><stop offset="0" stop-color="#eceef1"/><stop offset=".48" stop-color="#dfe2e6"/><stop offset=".5" stop-color="#cdd1d6"/><stop offset="1" stop-color="#c8cbd0"/></linearGradient></defs><path d="M0.5 23 V3 Q0.5 0.5 3 0.5 H66 C71 0.5 73 4 75 9 L77 19 C78 22 80 23 82 23Z" fill="url(#tn)" stroke="#8e9196" stroke-width="1"/><path d="M1.5 23 V3.5 Q1.5 1.5 3.5 1.5 H66 C70 1.5 72 5 74 9.5 L76 19.5" fill="none" stroke="rgba(255,255,255,.75)" stroke-width="1"/></svg>
<svg class="a" style="left:221px;top:147px" width="16" height="13" viewBox="0 0 16 13"><rect x="0" y="0" width="16" height="13" fill="#7f94c4"/><rect x="0" y="12" width="16" height="1" fill="#34446c"/><rect x="15" y="1" width="1" height="12" fill="#3e4f7a"/><rect x="0" y="0" width="16" height="3" fill="#6c82b6"/><path d="M1.5 1.5 H4.5 M6.5 1.5 H9.5 M11.5 1.5 H14.5" stroke="#a9b8de" stroke-width="1"/><rect x="1" y="3.5" width="4" height="2.5" fill="#fff"/><rect x="6" y="3.5" width="4" height="2.5" fill="#fafbfe"/><rect x="11" y="3.5" width="3.5" height="2.5" fill="#e4ebfb"/><rect x="1" y="6.5" width="4" height="2.5" fill="#fff"/><rect x="6" y="6.5" width="4" height="2.5" fill="#f2f5fc"/><rect x="11" y="6.5" width="3.5" height="2.5" fill="#d8e3fb"/><rect x="1" y="9.5" width="4" height="2.5" fill="#fff"/><rect x="6" y="9.5" width="4" height="2.5" fill="#eef2fb"/><rect x="11" y="9.5" width="3.5" height="2.5" fill="#c9d8fa"/></svg>
<div class="a" style="left:245.2px;top:148.17px;font-size:11.6px;line-height:11.6px;color:#1c1020;font-weight:400;">Проект</div>
<svg class="a" style="left:485px;top:143px" width="97" height="23" viewBox="0 0 97 23"><defs><linearGradient id="ta" x1="0" y1="0" x2="0" y2="1"><stop offset="0" stop-color="#fedcaa"/><stop offset=".48" stop-color="#fcc97c"/><stop offset=".5" stop-color="#fbb244"/><stop offset="1" stop-color="#fedd80"/></linearGradient></defs><path d="M0.5 23 V3 Q0.5 0.5 3 0.5 H78 C83 0.5 85 4 87 9 L91 19 C92 22 94 23 96 23Z" fill="url(#ta)" stroke="none" stroke-width="1"/><path d="M1.5 23 V3.5 Q1.5 1.5 3.5 1.5 H78 C82 1.5 84 5 86 9.5 L90 19.5" fill="none" stroke="rgba(255,240,210,.5)" stroke-width="1"/></svg>
<svg class="a" style="left:490px;top:147px" width="16" height="13" viewBox="0 0 16 13"><rect x="0" y="0" width="16" height="13" fill="#7f94c4"/><rect x="0" y="12" width="16" height="1" fill="#34446c"/><rect x="15" y="1" width="1" height="12" fill="#3e4f7a"/><rect x="0" y="0" width="16" height="3" fill="#6c82b6"/><path d="M1.5 1.5 H4.5 M6.5 1.5 H9.5 M11.5 1.5 H14.5" stroke="#a9b8de" stroke-width="1"/><rect x="1" y="3.5" width="4" height="2.5" fill="#fff"/><rect x="6" y="3.5" width="4" height="2.5" fill="#fafbfe"/><rect x="11" y="3.5" width="3.5" height="2.5" fill="#e4ebfb"/><rect x="1" y="6.5" width="4" height="2.5" fill="#fff"/><rect x="6" y="6.5" width="4" height="2.5" fill="#f2f5fc"/><rect x="11" y="6.5" width="3.5" height="2.5" fill="#d8e3fb"/><rect x="1" y="9.5" width="4" height="2.5" fill="#fff"/><rect x="6" y="9.5" width="4" height="2.5" fill="#eef2fb"/><rect x="11" y="9.5" width="3.5" height="2.5" fill="#c9d8fa"/></svg>
<div class="a" style="left:514.2px;top:148.56px;font-size:11.14px;line-height:11.14px;color:#1a1020;font-weight:700;">Работник</div>
<svg class="a" style="left:1262px;top:149px" width="11" height="10" viewBox="0 0 11 10"><path d="M1.5 1.5 L9.5 8.5 M9.5 1.5 L1.5 8.5" stroke="#fff" stroke-width="2"/></svg>
<div class="a" style="left:215px;top:166px;width:1065px;height:563px;background:#fff"></div>
<div class="a" style="left:215px;top:166px;width:1065px;height:20px;background:#f3f4fa"></div>
<div class="a" style="left:215px;top:166px;width:1051px;height:20px;background:linear-gradient(#f6f7f9 0,#f6f7f9 1px,#f2f2f2 2px,#ebebeb 60%,#e0e0e0);border-bottom:1px solid #d3d9e4"></div>
<div class="a" style="left:215px;top:166px;width:18px;height:19px;background:#cdcdcd"></div>
<svg class="a" style="left:218px;top:170px" width="13" height="13" viewBox="0 0 13 13"><defs><linearGradient id="cg" x1="0" y1="0" x2="0" y2="1"><stop offset="0" stop-color="#ffffff"/><stop offset="1" stop-color="#d6dbe6"/></linearGradient></defs><path d="M12 1 V12 H1 Z" fill="url(#cg)"/><path d="M1 12 L12 1" stroke="#a9c4ec" stroke-width="1"/></svg>
<div class="a" style="left:1149px;top:166px;width:117px;height:20px;background:linear-gradient(#fce3a8,#f8d081 55%,#f1bd5c);border-bottom:1px solid #e3c98e"></div>
<div class="a" style="left:1155px;top:169.23px;font-size:13.9px;line-height:13.9px;color:#3b2c3a;font-weight:400;font-style:italic;">Добавить поле</div>
<div class="a" style="left:342px;top:166px;width:1px;height:19px;background:#a9a9a9"></div>
<div class="a" style="left:252px;top:168.73px;font-size:13.3px;line-height:13.3px;color:#33283a;font-weight:400;">Id_работни</div>
<svg class="a" style="left:329px;top:175px" width="7" height="4" viewBox="0 0 7 4"><path d="M0 0 H7 L3.5 4Z" fill="#222"/></svg>
<div class="a" style="left:436px;top:166px;width:1px;height:19px;background:#a9a9a9"></div>
<div class="a" style="left:353px;top:168.73px;font-size:13.3px;line-height:13.3px;color:#33283a;font-weight:400;">Фамилия</div>
<svg class="a" style="left:423px;top:175px" width="7" height="4" viewBox="0 0 7 4"><path d="M0 0 H7 L3.5 4Z" fill="#222"/></svg>
<div class="a" style="left:530px;top:166px;width:1px;height:19px;background:#a9a9a9"></div>
<div class="a" style="left:463.8px;top:168.73px;font-size:13.3px;line-height:13.3px;color:#33283a;font-weight:400;">Имя</div>
<svg class="a" style="left:517px;top:175px" width="7" height="4" viewBox="0 0 7 4"><path d="M0 0 H7 L3.5 4Z" fill="#222"/></svg>
<div class="a" style="left:624px;top:166px;width:1px;height:19px;background:#a9a9a9"></div>
<div class="a" style="left:541.5px;top:168.73px;font-size:13.3px;line-height:13.3px;color:#33283a;font-weight:400;">Отчество</div>
<svg class="a" style="left:611px;top:175px" width="7" height="4" viewBox="0 0 7 4"><path d="M0 0 H7 L3.5 4Z" fill="#222"/></svg>
<div class="a" style="left:778px;top:166px;width:1px;height:19px;background:#a9a9a9"></div>
<div class="a" style="left:635.3px;top:168.73px;font-size:13.3px;line-height:13.3px;color:#33283a;font-weight:400;">Вид_деятельности</div>
<svg class="a" style="left:765px;top:175px" width="7" height="4" viewBox="0 0 7 4"><path d="M0 0 H7 L3.5 4Z" fill="#222"/></svg>
<div class="a" style="left:872px;top:166px;width:1px;height:19px;background:#a9a9a9"></div>
<div class="a" style="left:790.5px;top:168.73px;font-size:13.3px;line-height:13.3px;color:#33283a;font-weight:400;">Стаж,лет</div>
<svg class="a" style="left:859px;top:175px" width="7" height="4" viewBox="0 0 7 4"><path d="M0 0 H7 L3.5 4Z" fill="#222"/></svg>
<div class="a" style="left:1045px;top:166px;width:1px;height:19px;background:#a9a9a9"></div>
<div class="a" style="left:915.8px;top:168.73px;font-size:13.3px;line-height:13.3px;color:#33283a;font-weight:400;">Дом_адрес</div>
<svg class="a" style="left:1032px;top:175px" width="7" height="4" viewBox="0 0 7 4"><path d="M0 0 H7 L3.5 4Z" fill="#222"/></svg>
<div class="a" style="left:1149px;top:166px;width:1px;height:19px;background:#a9a9a9"></div>
<div class="a" style="left:1062.2px;top:168.73px;font-size:13.3px;line-height:13.3px;color:#33283a;font-weight:400;">Телефон</div>
<svg class="a" style="left:1136px;top:175px" width="7" height="4" viewBox="0 0 7 4"><path d="M0 0 H7 L3.5 4Z" fill="#222"/></svg>
<div class="a" style="left:233px;top:166px;width:1px;height:19px;background:#b8b8b8"></div>
<div class="a" style="left:248px;top:166px;width:1px;height:19px;background:#a9a9a9"></div>
<div class="a" style="left:233px;top:186px;width:1033px;height:20px;background:#ffffff"></div>
<div class="a" style="left:215px;top:186px;width:18px;height:20px;background:#ebebeb;border-bottom:1px solid #b6b6b6"></div>
<div class="a" style="left:233px;top:205px;width:1033px;height:1px;background:#c9d2e4"></div>
<svg class="a" style="left:237px;top:191px" width="9" height="9" viewBox="0 0 9 9"><rect x="0.5" y="0.5" width="8" height="8" fill="#fafafa" stroke="#c6c6c6"/><path d="M2 4.5 H7 M4.5 2 V7" stroke="#000" stroke-width="1.3"/></svg>
<div class="a" style="left:248px;width:92px;text-align:right;top:189.73px;font-size:13.3px;line-height:13.3px;color:#2d2438">101</div>
<div class="a" style="left:346.5px;top:189.73px;font-size:13.3px;line-height:13.3px;color:#2d2438;font-weight:400;">Петров</div>
<div class="a" style="left:440.5px;top:189.73px;font-size:13.3px;line-height:13.3px;color:#2d2438;font-weight:400;">Петр</div>
<div class="a" style="left:534.5px;top:189.73px;font-size:13.3px;line-height:13.3px;color:#2d2438;font-weight:400;">Петрович</div>
<div class="a" style="left:628.5px;top:189.73px;font-size:13.3px;line-height:13.3px;color:#2d2438;font-weight:400;">садовник</div>
<div class="a" style="left:782.5px;top:189.73px;font-size:13.3px;line-height:13.3px;color:#2d2438;font-weight:400;">10</div>
<div class="a" style="left:876.5px;top:189.73px;font-size:13.3px;line-height:13.3px;color:#2d2438;font-weight:400;">ул.Краматорская 13</div>
<div class="a" style="left:1049.5px;top:189.73px;font-size:13.3px;line-height:13.3px;color:#2d2438;font-weight:400;">7-13-32</div>
<div class="a" style="left:233px;top:206px;width:1033px;height:20px;background:#f3f3f3"></div>
<div class="a" style="left:215px;top:206px;width:18px;height:20px;background:#ebebeb;border-bottom:1px solid #b6b6b6"></div>
<div class="a" style="left:233px;top:225px;width:1033px;height:1px;background:#c9d2e4"></div>
<svg class="a" style="left:237px;top:211px" width="9" height="9" viewBox="0 0 9 9"><rect x="0.5" y="0.5" width="8" height="8" fill="#fafafa" stroke="#c6c6c6"/><path d="M2 4.5 H7 M4.5 2 V7" stroke="#000" stroke-width="1.3"/></svg>
<div class="a" style="left:248px;width:92px;text-align:right;top:209.73px;font-size:13.3px;line-height:13.3px;color:#2d2438">102</div>
<div class="a" style="left:346.5px;top:209.73px;font-size:13.3px;line-height:13.3px;color:#2d2438;font-weight:400;">Афанасьев</div>
<div class="a" style="left:440.5px;top:209.73px;font-size:13.3px;line-height:13.3px;color:#2d2438;font-weight:400;">Антон</div>
<div class="a" style="left:534.5px;top:209.73px;font-size:13.3px;line-height:13.3px;color:#2d2438;font-weight:400;">Павлович</div>
<div class="a" style="left:628.5px;top:209.73px;font-size:13.3px;line-height:13.3px;color:#2d2438;font-weight:400;">маляр</div>
<div class="a" style="left:782.5px;top:209.73px;font-size:13.3px;line-height:13.3px;color:#2d2438;font-weight:400;">4</div>
<div class="a" style="left:876.5px;top:209.73px;font-size:13.3px;line-height:13.3px;color:#2d2438;font-weight:400;">ул.Нижняя,15</div>
<div class="a" style="left:1049.5px;top:209.73px;font-size:13.3px;line-height:13.3px;color:#2d2438;font-weight:400;">6-66-66</div>
<div class="a" style="left:233px;top:226px;width:1033px;height:20px;background:#ffffff"></div>
<div class="a" style="left:215px;top:226px;width:18px;height:20px;background:#ebebeb;border-bottom:1px solid #b6b6b6"></div>
<div class="a" style="left:233px;top:245px;width:1033px;height:1px;background:#c9d2e4"></div>
<svg class="a" style="left:237px;top:231px" width="9" height="9" viewBox="0 0 9 9"><rect x="0.5" y="0.5" width="8" height="8" fill="#fafafa" stroke="#c6c6c6"/><path d="M2 4.5 H7 M4.5 2 V7" stroke="#000" stroke-width="1.3"/></svg>
<div class="a" style="left:248px;width:92px;text-align:right;top:229.73px;font-size:13.3px;line-height:13.3px;color:#2d2438">103</div>
<div class="a" style="left:346.5px;top:229.73px;font-size:13.3px;line-height:13.3px;color:#2d2438;font-weight:400;">Леонидова</div>
<div class="a" style="left:440.5px;top:229.73px;font-size:13.3px;line-height:13.3px;color:#2d2438;font-weight:400;">Светлана</div>
<div class="a" style="left:534.5px;top:229.73px;font-size:13.3px;line-height:13.3px;color:#2d2438;font-weight:400;">Ивановна</div>
<div class="a" style="left:628.5px;top:229.73px;font-size:13.3px;line-height:13.3px;color:#2d2438;font-weight:400;">садовник</div>
<div class="a" style="left:782.5px;top:229.73px;font-size:13.3px;line-height:13.3px;color:#2d2438;font-weight:400;">5</div>
<div class="a" style="left:876.5px;top:229.73px;font-size:13.3px;line-height:13.3px;color:#2d2438;font-weight:400;">ул.Московская,2</div>
<div class="a" style="left:1049.5px;top:229.73px;font-size:13.3px;line-height:13.3px;color:#2d2438;font-weight:400;">1-11-11</div>
<div class="a" style="left:233px;top:246px;width:1033px;height:20px;background:#f3f3f3"></div>
<div class="a" style="left:215px;top:246px;width:18px;height:20px;background:#ebebeb;border-bottom:1px solid #b6b6b6"></div>
<div class="a" style="left:233px;top:265px;width:1033px;height:1px;background:#c9d2e4"></div>
<svg class="a" style="left:237px;top:251px" width="9" height="9" viewBox="0 0 9 9"><rect x="0.5" y="0.5" width="8" height="8" fill="#fafafa" stroke="#c6c6c6"/><path d="M2 4.5 H7 M4.5 2 V7" stroke="#000" stroke-width="1.3"/></svg>
<div class="a" style="left:248px;width:92px;text-align:right;top:249.73px;font-size:13.3px;line-height:13.3px;color:#2d2438">104</div>
<div class="a" style="left:346.5px;top:249.73px;font-size:13.3px;line-height:13.3px;color:#2d2438;font-weight:400;">Сарафанова</div>
<div class="a" style="left:440.5px;top:249.73px;font-size:13.3px;line-height:13.3px;color:#2d2438;font-weight:400;">Яна</div>
<div class="a" style="left:534.5px;top:249.73px;font-size:13.3px;line-height:13.3px;color:#2d2438;font-weight:400;">Игнатьевна</div>
<div class="a" style="left:628.5px;top:249.73px;font-size:13.3px;line-height:13.3px;color:#2d2438;font-weight:400;">маляр-штукатур</div>
<div class="a" style="left:782.5px;top:249.73px;font-size:13.3px;line-height:13.3px;color:#2d2438;font-weight:400;">3</div>
<div class="a" style="left:876.5px;top:249.73px;font-size:13.3px;line-height:13.3px;color:#2d2438;font-weight:400;">ул.Р.Люксембург,52-2</div>
<div class="a" style="left:1049.5px;top:249.73px;font-size:13.3px;line-height:13.3px;color:#2d2438;font-weight:400;">3-31-32</div>
<div class="a" style="left:233px;top:266px;width:1033px;height:20px;background:#ffffff"></div>
<div class="a" style="left:215px;top:266px;width:18px;height:20px;background:#ebebeb;border-bottom:1px solid #b6b6b6"></div>
<div class="a" style="left:233px;top:285px;width:1033px;height:1px;background:#c9d2e4"></div>
<svg class="a" style="left:237px;top:271px" width="9" height="9" viewBox="0 0 9 9"><rect x="0.5" y="0.5" width="8" height="8" fill="#fafafa" stroke="#c6c6c6"/><path d="M2 4.5 H7 M4.5 2 V7" stroke="#000" stroke-width="1.3"/></svg>
<div class="a" style="left:248px;width:92px;text-align:right;top:269.73px;font-size:13.3px;line-height:13.3px;color:#2d2438">105</div>
<div class="a" style="left:346.5px;top:269.73px;font-size:13.3px;line-height:13.3px;color:#2d2438;font-weight:400;">Негрий</div>
<div class="a" style="left:440.5px;top:269.73px;font-size:13.3px;line-height:13.3px;color:#2d2438;font-weight:400;">Евгений</div>
<div class="a" style="left:534.5px;top:269.73px;font-size:13.3px;line-height:13.3px;color:#2d2438;font-weight:400;">Анатольевич</div>
<div class="a" style="left:628.5px;top:269.73px;font-size:13.3px;line-height:13.3px;color:#2d2438;font-weight:400;">дизайнер ландшафта</div>
<div class="a" style="left:782.5px;top:269.73px;font-size:13.3px;line-height:13.3px;color:#2d2438;font-weight:400;">6</div>
<div class="a" style="left:876.5px;top:269.73px;font-size:13.3px;line-height:13.3px;color:#2d2438;font-weight:400;">ул.Школьная,126</div>
<div class="a" style="left:233px;top:286px;width:1033px;height:20px;background:#f3f3f3"></div>
<div class="a" style="left:215px;top:286px;width:18px;height:20px;background:#ebebeb;border-bottom:1px solid #b6b6b6"></div>
<div class="a" style="left:233px;top:305px;width:1033px;height:1px;background:#c9d2e4"></div>
<svg class="a" style="left:237px;top:291px" width="9" height="9" viewBox="0 0 9 9"><rect x="0.5" y="0.5" width="8" height="8" fill="#fafafa" stroke="#c6c6c6"/><path d="M2 4.5 H7 M4.5 2 V7" stroke="#000" stroke-width="1.3"/></svg>
<div class="a" style="left:248px;width:92px;text-align:right;top:289.73px;font-size:13.3px;line-height:13.3px;color:#2d2438">106</div>
<div class="a" style="left:346.5px;top:289.73px;font-size:13.3px;line-height:13.3px;color:#2d2438;font-weight:400;">Писарев</div>
<div class="a" style="left:440.5px;top:289.73px;font-size:13.3px;line-height:13.3px;color:#2d2438;font-weight:400;">Дмитрий</div>
<div class="a" style="left:534.5px;top:289.73px;font-size:13.3px;line-height:13.3px;color:#2d2438;font-weight:400;">Николаевич</div>
<div class="a" style="left:628.5px;top:289.73px;font-size:13.3px;line-height:13.3px;color:#2d2438;font-weight:400;">лесоруб</div>
<div class="a" style="left:782.5px;top:289.73px;font-size:13.3px;line-height:13.3px;color:#2d2438;font-weight:400;">1</div>
<div class="a" style="left:876.5px;top:289.73px;font-size:13.3px;line-height:13.3px;color:#2d2438;font-weight:400;">ул.19-го Партсъезда,51-9</div>
<div class="a" style="left:1049.5px;top:289.73px;font-size:13.3px;line-height:13.3px;color:#2d2438;font-weight:400;">7-81-13</div>
<div class="a" style="left:233px;top:306px;width:1033px;height:20px;background:#ffffff"></div>
<div class="a" style="left:215px;top:306px;width:18px;height:20px;background:#ebebeb;border-bottom:1px solid #b6b6b6"></div>
<div class="a" style="left:233px;top:325px;width:1033px;height:1px;background:#c9d2e4"></div>
<svg class="a" style="left:237px;top:311px" width="9" height="9" viewBox="0 0 9 9"><rect x="0.5" y="0.5" width="8" height="8" fill="#fafafa" stroke="#c6c6c6"/><path d="M2 4.5 H7 M4.5 2 V7" stroke="#000" stroke-width="1.3"/></svg>
<div class="a" style="left:248px;width:92px;text-align:right;top:309.73px;font-size:13.3px;line-height:13.3px;color:#2d2438">107</div>
<div class="a" style="left:346.5px;top:309.73px;font-size:13.3px;line-height:13.3px;color:#2d2438;font-weight:400;">Фетисова</div>
<div class="a" style="left:440.5px;top:309.73px;font-size:13.3px;line-height:13.3px;color:#2d2438;font-weight:400;">Ксения</div>
<div class="a" style="left:534.5px;top:309.73px;font-size:13.3px;line-height:13.3px;color:#2d2438;font-weight:400;">Михайловна</div>
<div class="a" style="left:628.5px;top:309.73px;font-size:13.3px;line-height:13.3px;color:#2d2438;font-weight:400;">цветовод</div>
<div class="a" style="left:782.5px;top:309.73px;font-size:13.3px;line-height:13.3px;color:#2d2438;font-weight:400;">3</div>
<div class="a" style="left:876.5px;top:309.73px;font-size:13.3px;line-height:13.3px;color:#2d2438;font-weight:400;">ул.Героев Союза,26</div>
<div class="a" style="left:1049.5px;top:309.73px;font-size:13.3px;line-height:13.3px;color:#2d2438;font-weight:400;">6-62-16</div>
<div class="a" style="left:233px;top:326px;width:1033px;height:20px;background:#f3f3f3"></div>
<div class="a" style="left:215px;top:326px;width:18px;height:20px;background:#ebebeb;border-bottom:1px solid #b6b6b6"></div>
<div class="a" style="left:233px;top:345px;width:1033px;height:1px;background:#c9d2e4"></div>
<svg class="a" style="left:237px;top:331px" width="9" height="9" viewBox="0 0 9 9"><rect x="0.5" y="0.5" width="8" height="8" fill="#fafafa" stroke="#c6c6c6"/><path d="M2 4.5 H7 M4.5 2 V7" stroke="#000" stroke-width="1.3"/></svg>
<div class="a" style="left:248px;width:92px;text-align:right;top:329.73px;font-size:13.3px;line-height:13.3px;color:#2d2438">108</div>
<div class="a" style="left:346.5px;top:329.73px;font-size:13.3px;line-height:13.3px;color:#2d2438;font-weight:400;">Фетисова</div>
<div class="a" style="left:440.5px;top:329.73px;font-size:13.3px;line-height:13.3px;color:#2d2438;font-weight:400;">Олеся</div>
<div class="a" style="left:534.5px;top:329.73px;font-size:13.3px;line-height:13.3px;color:#2d2438;font-weight:400;">Михайловна</div>
<div class="a" style="left:628.5px;top:329.73px;font-size:13.3px;line-height:13.3px;color:#2d2438;font-weight:400;">лесоруб</div>
<div class="a" style="left:782.5px;top:329.73px;font-size:13.3px;line-height:13.3px;color:#2d2438;font-weight:400;">3</div>
<div class="a" style="left:876.5px;top:329.73px;font-size:13.3px;line-height:13.3px;color:#2d2438;font-weight:400;">ул.Курортная,16</div>
<div class="a" style="left:1049.5px;top:329.73px;font-size:13.3px;line-height:13.3px;color:#2d2438;font-weight:400;">5-51-55</div>
<div class="a" style="left:215px;top:346px;width:18px;height:20px;background:#fed58f"></div>
<svg class="a" style="left:219px;top:351px" width="11" height="11" viewBox="0 0 11 11"><path d="M5.5 0.5 V10.5 M0.5 5.5 H10.5 M2 2 L9 9 M9 2 L2 9" stroke="#000" stroke-width="1.15"/><circle cx="5.5" cy="5.5" r="1.6" fill="#000"/></svg>
<div class="a" style="left:248px;top:346px;width:1018px;height:19px;background:#e6e9f2"></div>
<div class="a" style="left:233px;top:365px;width:1033px;height:1px;background:#c9d2e4"></div>
<div class="a" style="left:215px;top:366px;width:18px;height:363px;background:#f5f6fc"></div>
<div class="a" style="left:233px;top:385px;width:1047px;height:1px;background:#edeef4"></div>
<div class="a" style="left:215px;top:385px;width:18px;height:1px;background:#e9e7e6"></div>
<div class="a" style="left:233px;top:405px;width:1047px;height:1px;background:#edeef4"></div>
<div class="a" style="left:215px;top:405px;width:18px;height:1px;background:#e9e7e6"></div>
<div class="a" style="left:233px;top:425px;width:1047px;height:1px;background:#edeef4"></div>
<div class="a" style="left:215px;top:425px;width:18px;height:1px;background:#e9e7e6"></div>
<div class="a" style="left:233px;top:445px;width:1047px;height:1px;background:#edeef4"></div>
<div class="a" style="left:215px;top:445px;width:18px;height:1px;background:#e9e7e6"></div>
<div class="a" style="left:233px;top:465px;width:1047px;height:1px;background:#edeef4"></div>
<div class="a" style="left:215px;top:465px;width:18px;height:1px;background:#e9e7e6"></div>
<div class="a" style="left:233px;top:485px;width:1047px;height:1px;background:#edeef4"></div>
<div class="a" style="left:215px;top:485px;width:18px;height:1px;background:#e9e7e6"></div>
<div class="a" style="left:233px;top:505px;width:1047px;height:1px;background:#edeef4"></div>
<div class="a" style="left:215px;top:505px;width:18px;height:1px;background:#e9e7e6"></div>
<div class="a" style="left:233px;top:525px;width:1047px;height:1px;background:#edeef4"></div>
<div class="a" style="left:215px;top:525px;width:18px;height:1px;background:#e9e7e6"></div>
<div class="a" style="left:233px;top:545px;width:1047px;height:1px;background:#edeef4"></div>
<div class="a" style="left:215px;top:545px;width:18px;height:1px;background:#e9e7e6"></div>
<div class="a" style="left:233px;top:565px;width:1047px;height:1px;background:#edeef4"></div>
<div class="a" style="left:215px;top:565px;width:18px;height:1px;background:#e9e7e6"></div>
<div class="a" style="left:233px;top:585px;width:1047px;height:1px;background:#edeef4"></div>
<div class="a" style="left:215px;top:585px;width:18px;height:1px;background:#e9e7e6"></div>
<div class="a" style="left:233px;top:605px;width:1047px;height:1px;background:#edeef4"></div>
<div class="a" style="left:215px;top:605px;width:18px;height:1px;background:#e9e7e6"></div>
<div class="a" style="left:233px;top:625px;width:1047px;height:1px;background:#edeef4"></div>
<div class="a" style="left:215px;top:625px;width:18px;height:1px;background:#e9e7e6"></div>
<div class="a" style="left:233px;top:645px;width:1047px;height:1px;background:#edeef4"></div>
<div class="a" style="left:215px;top:645px;width:18px;height:1px;background:#e9e7e6"></div>
<div class="a" style="left:233px;top:665px;width:1047px;height:1px;background:#edeef4"></div>
<div class="a" style="left:215px;top:665px;width:18px;height:1px;background:#e9e7e6"></div>
<div class="a" style="left:233px;top:685px;width:1047px;height:1px;background:#edeef4"></div>
<div class="a" style="left:215px;top:685px;width:18px;height:1px;background:#e9e7e6"></div>
<div class="a" style="left:233px;top:705px;width:1047px;height:1px;background:#edeef4"></div>
<div class="a" style="left:215px;top:705px;width:18px;height:1px;background:#e9e7e6"></div>
<div class="a" style="left:233px;top:725px;width:1047px;height:1px;background:#edeef4"></div>
<div class="a" style="left:215px;top:725px;width:18px;height:1px;background:#e9e7e6"></div>
<div class="a" style="left:233px;top:186px;width:1px;height:180px;background:#c9d2e4"></div>
<div class="a" style="left:233px;top:366px;width:1px;height:363px;background:#ecedf3"></div>
<div class="a" style="left:248px;top:186px;width:1px;height:180px;background:#c9d2e4"></div>
<div class="a" style="left:248px;top:366px;width:1px;height:363px;background:#ecedf3"></div>
<div class="a" style="left:342px;top:186px;width:1px;height:180px;background:#c9d2e4"></div>
<div class="a" style="left:342px;top:366px;width:1px;height:363px;background:#ecedf3"></div>
<div class="a" style="left:436px;top:186px;width:1px;height:180px;background:#c9d2e4"></div>
<div class="a" style="left:436px;top:366px;width:1px;height:363px;background:#ecedf3"></div>
<div class="a" style="left:530px;top:186px;width:1px;height:180px;background:#c9d2e4"></div>
<div class="a" style="left:530px;top:366px;width:1px;height:363px;background:#ecedf3"></div>
<div class="a" style="left:624px;top:186px;width:1px;height:180px;background:#c9d2e4"></div>
<div class="a" style="left:624px;top:366px;width:1px;height:363px;background:#ecedf3"></div>
<div class="a" style="left:778px;top:186px;width:1px;height:180px;background:#c9d2e4"></div>
<div class="a" style="left:778px;top:366px;width:1px;height:363px;background:#ecedf3"></div>
<div class="a" style="left:872px;top:186px;width:1px;height:180px;background:#c9d2e4"></div>
<div class="a" style="left:872px;top:366px;width:1px;height:363px;background:#ecedf3"></div>
<div class="a" style="left:1045px;top:186px;width:1px;height:180px;background:#c9d2e4"></div>
<div class="a" style="left:1045px;top:366px;width:1px;height:363px;background:#ecedf3"></div>
<div class="a" style="left:1149px;top:186px;width:1px;height:180px;background:#c9d2e4"></div>
<div class="a" style="left:1149px;top:366px;width:1px;height:363px;background:#ecedf3"></div>
<div class="a" style="left:1266px;top:186px;width:1px;height:180px;background:#c9d2e4"></div>
<div class="a" style="left:1266px;top:366px;width:1px;height:363px;background:#ecedf3"></div>
<div class="a" style="left:233px;top:186px;width:1px;height:160px;background:#b4b4b4"></div>
<div class="a" style="left:1148px;top:344px;width:120px;height:23px;border:2px solid #fbb45a;background:#fff"></div>
<div class="a" style="left:215px;top:729px;width:1065px;height:19px;background:linear-gradient(#dfe2e5 0,#dee1e4 10px,#c9ccd3 10px,#c9ccd3 19px);border-top:1px solid #5d6066;border-right:1px solid #5d6066"></div>
<div class="a" style="left:219.8px;top:733.72px;font-size:10.96px;line-height:10.96px;color:#2b1b2b;font-weight:400;">Запись:</div>
<svg class="a" style="left:265px;top:733px" width="9" height="9" viewBox="0 0 9 9"><rect x="0.5" y="1" width="1.6" height="7" fill="#111"/><path d="M8 1 L3 4.5 L8 8Z" fill="#111"/></svg>
<svg class="a" style="left:284px;top:733px" width="7" height="9" viewBox="0 0 7 9"><path d="M6 1 L1 4.5 L6 8Z" fill="#111"/></svg>
<div class="a" style="left:295px;top:731px;width:50px;height:16px;background:#e8e8e8;border:1px solid #8c8c8c"></div>
<div class="a" style="left:297px;top:734.43px;font-size:11.3px;line-height:11.3px;color:#2b1b2b;font-weight:400;">9 из 9</div>
<svg class="a" style="left:354px;top:733px" width="7" height="9" viewBox="0 0 7 9"><path d="M1 1 L6 4.5 L1 8Z" fill="#9c9ea3"/></svg>
<svg class="a" style="left:369px;top:733px" width="9" height="9" viewBox="0 0 9 9"><path d="M1 1 L6 4.5 L1 8Z" fill="#111"/><rect x="6.5" y="1" width="1.6" height="7" fill="#111"/></svg>
<svg class="a" style="left:384px;top:733px" width="13" height="9" viewBox="0 0 13 9"><path d="M1 1 L5 4.5 L1 8Z" fill="#a5a7ab"/><circle cx="9" cy="4.5" r="3" fill="#e8d9a0"/></svg>
<div class="a" style="left:402px;top:729px;width:1px;height:19px;background:#50545c"></div>
<svg class="a" style="left:411px;top:731px" width="16" height="15" viewBox="0 0 16 15"><path d="M1 2 H12 L8 7 V13 L5 11 V7Z" fill="none" stroke="#a9abb0" stroke-width="1.3"/><path d="M9 8 L14 13 M14 8 L9 13" stroke="#a9abb0" stroke-width="1.4"/></svg>
<div class="a" style="left:429.5px;top:734.48px;font-size:11.24px;line-height:11.24px;color:#a3a5a9;font-weight:400;">Нет фильтра</div>
<div class="a" style="left:506px;top:729px;width:1px;height:19px;background:#50545c"></div>
<div class="a" style="left:512px;top:731px;width:70px;height:16px;background:#e9e9e9;border:1px solid #8c8c8c"></div>
<div class="a" style="left:514.5px;top:734.43px;font-size:11.3px;line-height:11.3px;color:#2b1b2b;font-weight:400;">Поиск</div>
<div class="a" style="left:0px;top:747px;width:1280px;height:27px;background:linear-gradient(#42454f 0,#3d404a 8.5px,#323232 9px,#353535 18px,#3a3a3a 23px,#8e9ab2 23.5px,#8e9ab2 24.5px,#6d7790 25px)"></div>
<div class="a" style="left:0px;top:771px;width:82px;height:3px;background:linear-gradient(#7a7a7a,#4a4a4a)"></div>
<div class="a" style="left:8.3px;top:754.28px;font-size:11.47px;line-height:11.47px;color:#ffffff;font-weight:400;">Режим таблицы</div>
<div class="a" style="left:639px;top:748px;width:1px;height:22px;background:#1e1e1e;box-shadow:1px 0 0 #777"></div>
<div class="a" style="left:1140.6px;top:754.43px;font-size:11.3px;line-height:11.3px;color:#ffffff;font-weight:400;">Num Lock</div>
<div class="a" style="left:1200px;top:748px;width:1px;height:22px;background:#161616;box-shadow:1px 0 0 #6a6a6a"></div>
<div class="a" style="left:1201px;top:749px;width:79px;height:21px;border:1px solid #4a4a4a;border-radius:3px 0 0 3px;background:linear-gradient(#d2d2d2,#c2c2c2 45%,#ababab 55%,#bdbdbd)"></div>
<div class="a" style="left:1202px;top:750px;width:4px;height:19px;background:linear-gradient(90deg,#6d6f73,#9a9a9a)"></div>
<div class="a" style="left:1206px;top:750px;width:18px;height:19px;background:linear-gradient(#fce4b4,#f8d089 45%,#f3b53c 55%,#fde39a)"></div>
<div class="a" style="left:1224px;top:750px;width:1px;height:19px;background:linear-gradient(#b0b0b0,#8a8a8a)"></div>
<div class="a" style="left:1242px;top:750px;width:1px;height:19px;background:linear-gradient(#b0b0b0,#8a8a8a)"></div>
<div class="a" style="left:1260px;top:750px;width:1px;height:19px;background:linear-gradient(#b0b0b0,#8a8a8a)"></div>
<svg class="a" style="left:1209px;top:754px" width="12" height="10" viewBox="0 0 12 10"><rect x="0.5" y="0.5" width="11" height="9" fill="#fff" stroke="#3a3a3a"/><rect x="1" y="1" width="10" height="1.5" fill="#3a3a3a"/><rect x="1" y="1" width="1.5" height="8" fill="#3a3a3a"/><path d="M3 5 H11 M6.5 3 V9" stroke="#3a3a3a"/></svg>
<svg class="a" style="left:1228px;top:754px" width="11" height="10" viewBox="0 0 11 10"><rect x="2" y="0" width="2.5" height="2.5" fill="#6a6a6a"/><rect x="5.5" y="0" width="2.5" height="2.5" fill="#6a6a6a"/><rect x="0" y="3.5" width="2.5" height="2.5" fill="#6a6a6a"/><rect x="3.5" y="3.5" width="2.5" height="2.5" fill="#fff"/><rect x="7" y="3.5" width="2.5" height="2.5" fill="#6a6a6a"/><rect x="0" y="7" width="2.5" height="2.5" fill="#6a6a6a"/><rect x="3.5" y="7" width="2.5" height="2.5" fill="#fff"/><path d="M9 6 L10.5 8 L9 9.5" stroke="#555" fill="none"/></svg>
<svg class="a" style="left:1245px;top:754px" width="12" height="10" viewBox="0 0 12 10"><path d="M1 9 V4 L3 1.5 M3.5 9 H10.5" fill="none" stroke="#3d3d3d" stroke-width="1.3"/><rect x="3.5" y="4.5" width="2" height="3.5" fill="#6a6a6a"/><rect x="6.5" y="1" width="2.5" height="7" fill="none" stroke="#555"/></svg>
<svg class="a" style="left:1264px;top:753px" width="12" height="11" viewBox="0 0 12 11"><path d="M1 1.5 L7 7" stroke="#555" stroke-width="1.2"/><path d="M10.5 1 L4.5 7" stroke="#3d3d3d" stroke-width="1.6"/><path d="M1 4 L4 6" stroke="#888"/><path d="M1.5 10 H11" stroke="#3d3d3d" stroke-width="1.4" stroke-dasharray="1.5 1"/></svg>
<svg width="0" height="0" style="position:absolute"><defs>
<linearGradient id="gold" x1="0" y1="0" x2="1" y2="0"><stop offset="0" stop-color="#c98a10"/><stop offset=".3" stop-color="#ffe07a"/><stop offset=".6" stop-color="#f2bd2a"/><stop offset="1" stop-color="#b27a0a"/></linearGradient>
<linearGradient id="goldv" x1="0" y1="0" x2="0" y2="1"><stop offset="0" stop-color="#fff2a8"/><stop offset="1" stop-color="#e4a818"/></linearGradient>
<linearGradient id="bluev" x1="0" y1="0" x2="0" y2="1"><stop offset="0" stop-color="#7fa8ee"/><stop offset="1" stop-color="#3a6fd4"/></linearGradient>
<linearGradient id="blueb" x1="0" y1="0" x2="1" y2="1"><stop offset="0" stop-color="#9cc0ff"/><stop offset="1" stop-color="#1f4fc0"/></linearGradient>
<linearGradient id="greenb" x1="0" y1="0" x2="1" y2="1"><stop offset="0" stop-color="#a8e29a"/><stop offset="1" stop-color="#2f9a2a"/></linearGradient>
<radialGradient id="head" cx="40%" cy="35%" r="70%"><stop offset="0" stop-color="#ffffff"/><stop offset="1" stop-color="#7a7a7a"/></radialGradient>
</defs></svg>
<svg class="a" style="left:12px;top:56px" width="32" height="32" viewBox="0 0 32 32">
<rect x="5.5" y="7.5" width="25" height="23" fill="#fff" stroke="#6f86b0"/>
<rect x="6" y="8" width="24" height="5" fill="#6f9ae4"/>
<path d="M8 15.5 H28 M8 18 H28 M8 20.5 H28 M8 23 H28 M8 25.5 H28 M8 28 H28" stroke="#7c98cc" stroke-width="1"/>
<path d="M13 15 V29.5 M20.5 15 V29.5" stroke="#fff" stroke-width="1.4"/>
<path d="M1 8 L7.5 1 L14 7.5 L7.5 15 Z" fill="#f6d36a" stroke="#c99618" stroke-width=".8"/>
<path d="M1 8 L7.5 15 L7.5 17 L1 10 Z" fill="#d9a020"/><path d="M7.5 15 L14 7.5 L14 9.5 L7.5 17Z" fill="#b88010"/>
<path d="M15.5 6.5 L20 1.5 L25 6 L20.5 11.5 Z" fill="#ef8ef0" stroke="#b34cb8" stroke-width=".8"/>
<path d="M20.5 11.5 L25 6 L25 8 L20.5 13.5Z" fill="#c050c8"/><path d="M15.5 6.5 L20.5 11.5 L20.5 13.5 L15.5 8.5Z" fill="#d870dc"/>
</svg>
<svg class="a" style="left:52px;top:56px" width="18" height="17" viewBox="0 0 18 17"><path d="M3 2 H13 Q14.5 2 14 3.5 L9.5 11 Q9 12 7.5 12 H1.5 Q0 12 0.8 10.5 L5 3 Q5.5 2 3 2Z" fill="url(#goldv)" stroke="#7a5a10" stroke-width=".8"/><path d="M4.5 4.5 H11 M3.5 6.8 H9.5 M2.5 9 H8" stroke="#b08420" stroke-width=".8"/><path d="M1 10.5 Q2.5 9.5 3.5 11.5" fill="none" stroke="#7a5a10" stroke-width=".7"/><path d="M15.5 7 V12" stroke="#e01818" stroke-width="2.2" stroke-linecap="round"/><circle cx="15.5" cy="15" r="1.2" fill="#e01818"/></svg>
<svg class="a" style="left:54px;top:79px" width="16" height="16" viewBox="0 0 16 16"><rect x="0.5" y="1.5" width="9" height="13" fill="#eceef0" stroke="#b4b7bb"/><path d="M2.5 4 H7.5 M2.5 6.5 H7.5 M2.5 9 H7.5 M2.5 11.5 H7.5" stroke="#b9bcc0"/><path d="M9 2 L15 8 L11.5 8.5 L12 13 L9 9.5Z" fill="#e6e8ea" stroke="#b4b7bb" stroke-width=".8"/></svg>
<svg class="a" style="left:53px;top:100px" width="17" height="18" viewBox="0 0 17 18"><path d="M1 6 Q2 1 7 2 L6 5 Q3 4 3 7Z" fill="none" stroke="#b4b7bb"/><path d="M10 2 H15 V5" fill="none" stroke="#b4b7bb"/><rect x="5.5" y="7.5" width="11" height="9" fill="#eceef0" stroke="#b4b7bb"/><path d="M7 10.5 H15 M7 13 H15" stroke="#bcbfc3"/><path d="M2 15 L9 8" stroke="#b4b7bb" stroke-width="1.5"/></svg>
<svg class="a" style="left:88px;top:58px" width="32" height="30" viewBox="0 0 32 30"><rect x="1.5" y="9.5" width="11" height="12" rx="1" fill="#f4f6fb" stroke="#52688f"/><rect x="2" y="10" width="10" height="3" fill="#4f86e0"/><path d="M3.5 15.5 H10.5 M3.5 17.8 H10.5" stroke="#6b7690" stroke-width="1"/><rect x="19.5" y="1.5" width="11" height="12" rx="1" fill="#f4f6fb" stroke="#52688f"/><rect x="20" y="2" width="10" height="3" fill="#4f86e0"/><path d="M21.5 7.5 H28.5 M21.5 9.8 H28.5" stroke="#6b7690" stroke-width="1"/><rect x="17.5" y="16.5" width="11" height="12" rx="1" fill="#f4f6fb" stroke="#52688f"/><rect x="18" y="17" width="10" height="3" fill="#4f86e0"/><path d="M19.5 22.5 H26.5 M19.5 24.8 H26.5" stroke="#6b7690" stroke-width="1"/><path d="M13 15 L19 8 M13 16 L18 22" stroke="#4a5a78" stroke-width="1"/></svg>
<svg class="a" style="left:130px;top:57px" width="16" height="15" viewBox="0 0 16 15"><rect x="1.5" y="6.5" width="12" height="8" fill="#eceef0" stroke="#b5b8bc"/><path d="M1.5 6.5 L6 2 L10.5 6.5" fill="none" stroke="#b5b8bc" stroke-width="1.3"/><path d="M9 3 Q13 1 15 4" fill="none" stroke="#c0c3c6" stroke-width="1.8"/><path d="M3.5 9.5 H11.5 M3.5 12 H11.5" stroke="#c4c6ca"/></svg>
<svg class="a" style="left:130px;top:79px" width="17" height="16" viewBox="0 0 17 16"><rect x="0.5" y="0.5" width="16" height="12" fill="#fff" stroke="#5a72a8"/><rect x="1" y="1" width="15" height="3" fill="#7d9ad8"/><path d="M2 2.5 H4 M5.5 2.5 H7.5 M9 2.5 H11 M12.5 2.5 H14.5" stroke="#dbe6fb"/><path d="M4.5 4 V12.5 M8.5 4 V12.5 M12.5 4 V12.5 M1 7 H16 M1 10 H16" stroke="#8ea4d4" stroke-width="1"/><ellipse cx="5.5" cy="13" rx="3.8" ry="2.2" fill="none" stroke="#1f3566" stroke-width="1.4"/><ellipse cx="11.5" cy="13" rx="3.8" ry="2.2" fill="none" stroke="#1f3566" stroke-width="1.4"/><path d="M4 13 H13" stroke="#a9c0ea" stroke-width="1"/></svg>
<div class="a" style="left:130px;top:102px;width:13px;height:13px;border:1px solid #b9babc;background:linear-gradient(135deg,#e6e7e8,#f8f8f8)"></div>
<svg class="a" style="left:290px;top:56px" width="17" height="17" viewBox="0 0 17 17"><rect x="1.5" y="1.5" width="9" height="11" fill="#fff" stroke="#8a9ab8"/><path d="M3 4 H9 M3 6 H9 M3 8 H9 M3 10 H8" stroke="#6a84c0"/><rect x="6.5" y="5.5" width="7" height="5" fill="#fff" stroke="#2c5ab8"/><rect x="7" y="6" width="6" height="1.6" fill="#3a72e0"/><rect x="9.5" y="9.5" width="7" height="5" fill="#fff" stroke="#2c5ab8"/><rect x="10" y="10" width="6" height="1.6" fill="#3a72e0"/><rect x="5.5" y="11.5" width="6" height="5" fill="#fff" stroke="#2c5ab8"/><rect x="6" y="12" width="5" height="1.6" fill="#3a72e0"/></svg>
<svg class="a" style="left:289px;top:79px" width="18" height="16" viewBox="0 0 18 16"><path d="M1 3 H5 M2 6 H5 M0 9 H4 M1 12 H5 M0 14.5 H4" stroke="#8898b8" stroke-width=".8"/><rect x="5.5" y="1.5" width="8" height="7" fill="#fff" stroke="#2c5ab8"/><rect x="6" y="2" width="7" height="2" fill="#3a72e0"/><rect x="10.5" y="5.5" width="7" height="7" fill="#eef4ff" stroke="#2c5ab8"/><rect x="11" y="6" width="6" height="2" fill="#3a72e0"/><rect x="3.5" y="7.5" width="8" height="7" fill="#eef4ff" stroke="#2c5ab8"/><rect x="4" y="8" width="7" height="2" fill="#3a72e0"/></svg>
<svg class="a" style="left:289px;top:100px" width="18" height="18" viewBox="0 0 18 18"><rect x="3.5" y="0.5" width="13" height="9" fill="#e8eaee" stroke="#6d7a92"/><rect x="4" y="1" width="12" height="2" fill="#8a94a8"/><path d="M6 5 H8 M10 5 H12 M6 7.5 H8 M10 7.5 H12" stroke="#777"/><rect x="0.5" y="6.5" width="6" height="10" fill="#fff" stroke="#2c5ab8"/><rect x="1" y="7" width="5" height="2" fill="#3a72e0"/><path d="M2 11 H5 M2 13.5 H5" stroke="#335"/><rect x="10.5" y="5.5" width="7" height="10" fill="#fff" stroke="#2c5ab8"/><rect x="11" y="6" width="6" height="2" fill="#3a72e0"/><path d="M12.5 10 H15.5 M12.5 12.5 H15.5" stroke="#335"/><path d="M7 14 L10 12" stroke="#2c5ab8" stroke-width="1.2"/></svg>
<svg class="a" style="left:456px;top:56px" width="33" height="32" viewBox="0 0 33 32">
<path d="M14 3.5 V25.5 A8.5 3 0 0 0 31 25.5 V3.5Z" fill="url(#gold)" stroke="#a87810" stroke-width=".7"/>
<ellipse cx="22.5" cy="3.5" rx="8.5" ry="2.6" fill="#ffeca0" stroke="#c0901a" stroke-width=".7"/>
<rect x="5.5" y="20.5" width="18" height="9" fill="#fff" stroke="#6a7fa6"/>
<rect x="1.5" y="8" width="18.5" height="20" fill="#fff" stroke="#5b76aa"/>
<rect x="2" y="8.5" width="17.5" height="4" fill="#8ea8d8"/>
<path d="M8 8.5 V27.5 M14 8.5 V27.5 M2 17.5 H19.5 M2 22.5 H19.5" stroke="#7d93bc" stroke-width="1"/>
<path d="M20 22 Q27 21 27 15 L24.5 15 L28.5 10 L32 15 L29.5 15 Q29.5 24 20 25Z" fill="url(#bluev)" stroke="#1d4aa8" stroke-width=".7"/>
</svg>
<svg class="a" style="left:510px;top:55px" width="36" height="34" viewBox="0 0 36 34"><path d="M3 3.5 V13.5 A5 2.2 0 0 0 13 13.5 V3.5Z" fill="url(#gold)" stroke="#a87810" stroke-width=".6"/><ellipse cx="8" cy="3.5" rx="5" ry="2" fill="#fff0a8" stroke="#c0901a" stroke-width=".6"/><path d="M23 3.5 V13.5 A5 2.2 0 0 0 33 13.5 V3.5Z" fill="url(#gold)" stroke="#a87810" stroke-width=".6"/><ellipse cx="28" cy="3.5" rx="5" ry="2" fill="#fff0a8" stroke="#c0901a" stroke-width=".6"/><path d="M12.5 18.5 V29.5 A5.7 2.2 0 0 0 23.9 29.5 V18.5Z" fill="url(#gold)" stroke="#a87810" stroke-width=".6"/><ellipse cx="18.2" cy="18.5" rx="5.7" ry="2" fill="#fff0a8" stroke="#c0901a" stroke-width=".6"/><path d="M5 28 Q10 27 9.5 21 L11.5 21 L8 17 L4.5 21 L6.5 21 Q7 25 4 26Z" fill="url(#bluev)" stroke="#1d4aa8" stroke-width=".6"/><path d="M31 28 Q26 27 26.5 21 L24.5 21 L28 17 L31.5 21 L29.5 21 Q29 25 32 26Z" fill="url(#bluev)" stroke="#1d4aa8" stroke-width=".6"/></svg>
<svg class="a" style="left:636px;top:57px" width="31" height="31" viewBox="0 0 31 31">
<path d="M1.5 1.5 H15 L12 29.5 H1.5Z" fill="#fff" stroke="#6f84a8"/>
<path d="M17.5 1.5 H29.5 V29.5 H14.5Z" fill="#fff" stroke="#6f84a8"/>
<text x="3" y="8.5" font-family="Liberation Mono" font-weight="700" font-size="6.5" fill="#222">10</text>
<text x="3" y="14.5" font-family="Liberation Mono" font-weight="700" font-size="6.5" fill="#222">00</text>
<text x="3" y="20.5" font-family="Liberation Mono" font-weight="700" font-size="6.5" fill="#222">11</text>
<text x="3" y="26.5" font-family="Liberation Mono" font-weight="700" font-size="6.5" fill="#222">01</text>
<text x="19" y="8.5" font-family="Liberation Mono" font-weight="700" font-size="6.5" fill="#222">01</text>
<text x="19" y="14.5" font-family="Liberation Mono" font-weight="700" font-size="6.5" fill="#222">11</text>
<text x="19" y="20.5" font-family="Liberation Mono" font-weight="700" font-size="6.5" fill="#222">10</text>
<text x="19" y="26.5" font-family="Liberation Mono" font-weight="700" font-size="6.5" fill="#222">00</text>
<path d="M12 8 H16 V6 L19 9 L16 12 V10 H12Z" fill="#3a68d8"/>
<path d="M19 17.5 H14.5 V15.5 L11.5 18.5 L14.5 21.5 V19.5 H19Z" fill="#3a68d8"/>
</svg>
<svg class="a" style="left:762px;top:57px" width="32" height="30" viewBox="0 0 32 30">
<rect x="5.5" y="0.5" width="18" height="16" fill="#f0f1f3" stroke="#c4c6ca"/><rect x="6" y="1" width="17" height="3.5" fill="#d4d6da"/>
<path d="M0.5 11 L6 15.5 L0.5 20Z" fill="#dfe1e4" stroke="#c0c3c7"/>
<rect x="9.5" y="8.5" width="21" height="19" fill="#eceef0" stroke="#c4c6ca"/><rect x="10" y="9" width="20" height="3.5" fill="#d0d2d6"/>
<path d="M10 17 H30 M10 22 H30 M16 9 V27 M23 9 V27" stroke="#d6d8dc"/>
<path d="M15.5 19 A4.5 4.5 0 0 1 24 17 M24.5 20 A4.5 4.5 0 0 1 16 22" fill="none" stroke="#b8babe" stroke-width="1.6"/>
</svg>
<svg class="a" style="left:833px;top:56px" width="17" height="17" viewBox="0 0 17 17"><rect x="0.5" y="0.5" width="10" height="11" fill="#fff" stroke="#2a3e7a"/><path d="M2 3 H9 M2 5.5 H9 M2 8 H8" stroke="#445"/><rect x="3.5" y="3.5" width="10" height="10" fill="#fff" stroke="#2a3e7a"/><path d="M5 6 H12 M5 8.5 H10 M5 11 H9" stroke="#445"/><path d="M8 15.5 L15 8 L16.5 9.5 L9.5 16.5 L7.5 17Z" fill="#f4c84a" stroke="#6a4a10" stroke-width=".7"/><path d="M15 8 L16.5 9.5 L17 8.5 L16 7.5Z" fill="#e07070"/></svg>
<svg class="a" style="left:832px;top:78px" width="18" height="18" viewBox="0 0 18 18"><rect x="3.5" y="1.5" width="14" height="10" fill="#f4f6fa" stroke="#6b86b8"/><rect x="4" y="2" width="13" height="1.6" fill="#7c9ad0"/><text x="8" y="10" font-family="Liberation Sans" font-weight="700" font-size="7" fill="#223">**</text><path d="M1 8.5 V15 A4 1.6 0 0 0 9 15 V8.5Z" fill="url(#gold)" stroke="#a87810" stroke-width=".6"/><ellipse cx="5" cy="8.5" rx="4" ry="1.5" fill="#fff0a8" stroke="#c0901a" stroke-width=".6"/></svg>
<svg class="a" style="left:833px;top:101px" width="17" height="17" viewBox="0 0 17 17"><path d="M1 4 L11 2 L14 6 V15 H3 L1 12Z" fill="#dfe6f4" stroke="#6d82ac" stroke-width=".8"/><path d="M1 7 H13 M1 10 H13 M1 13 H13 M4 3 V15 M7.5 2.5 V15 M11 2 V15" stroke="#fff" stroke-width="1.2"/><rect x="3" y="13" width="2.5" height="2" fill="#3d63c8"/><rect x="9" y="10" width="2.5" height="2" fill="#3dc8d8"/><rect x="12.5" y="0.5" width="4" height="4" fill="#30b040" stroke="#1c7a28" stroke-width=".6"/></svg>
<svg class="a" style="left:1019px;top:56px" width="33" height="33" viewBox="0 0 33 33">
<rect x="5.5" y="5.5" width="22" height="22" fill="#fff" stroke="#8aa0c8"/>
<path d="M5.5 10.5 H27.5 M5.5 15.5 H27.5 M5.5 21 H27.5 M11 5.5 V27.5 M16.5 5.5 V27.5 M22 5.5 V27.5" stroke="#aabad8" stroke-width="1.2"/>
<path d="M1.5 9 H12.5 V17 Q10 19 8.5 19 V21 L10.5 22.5 L8.5 24 L10 25.5 L8.5 27 V30.5 Q6.5 32 5 30.5 V19 Q2 18 1.5 17Z" fill="url(#goldv)" stroke="#b08a18" stroke-width=".8"/>
<circle cx="6.8" cy="11.5" r=".9" fill="#a06a10"/>
<path d="M21 7 V4.5 A4 4 0 0 1 29 4.5 V7" fill="none" stroke="#d9b560" stroke-width="1.8"/>
<rect x="18.5" y="6.5" width="13" height="9.5" rx="1" fill="url(#goldv)" stroke="#9a6e14" stroke-width=".8"/>
<path d="M25 8.5 L23.5 10.5 H24.5 V13.5 H25.5 V10.5 H26.5Z" fill="#3a3a20"/>
</svg>
<svg class="a" style="left:1098px;top:56px" width="33" height="33" viewBox="0 0 33 33">
<circle cx="22" cy="6.5" r="5" fill="url(#head)" stroke="#555" stroke-width=".6"/>
<path d="M16 22 Q15 12 22 12 Q29 12 29 22 Q22 25 16 22Z" fill="url(#greenb)" stroke="#2a6a2a" stroke-width=".6"/>
<path d="M20.5 12 L22 15 L23.5 12Z" fill="#fff"/>
<circle cx="14" cy="9" r="5" fill="url(#head)" stroke="#555" stroke-width=".6"/>
<path d="M8 25 Q7 15 14 15 Q21 15 21 25 Q14 28 8 25Z" fill="url(#blueb)" stroke="#223f8a" stroke-width=".6"/>
<path d="M12.5 15 L14 18 L15.5 15Z" fill="#fff"/>
<path d="M1.5 19.5 Q1 14.5 6 14.5 Q10 15 10.5 18 L18 26 L17 27.5 L15.5 26.5 L14.5 28 L13 27 L12 28.5 L8 22.5 Q3 23 1.5 19.5Z" fill="url(#goldv)" stroke="#8a6a10" stroke-width=".7"/>
<circle cx="5" cy="18" r="1.3" fill="#a88a30"/>
</svg>
<svg class="a" style="left:1181px;top:56px" width="33" height="33" viewBox="0 0 33 33">
<path d="M17 2.5 H10.5 V6.5 M10.5 26 V30.5 H17" fill="none" stroke="#46556e" stroke-width="1.3"/>
<rect x="1.5" y="6.5" width="18" height="19" fill="#fff" stroke="#5a74a8"/>
<rect x="2" y="7" width="17" height="3.5" fill="#a9bbdf"/>
<path d="M7.5 7 V25.5 M13.5 7 V25.5 M2 15 H19.5 M2 20.5 H19.5" stroke="#a0b2d6" stroke-width="1"/>
<rect x="17.5" y="1.5" width="13" height="11" fill="#fff" stroke="#485f92"/><rect x="18" y="2" width="12" height="2.5" fill="#6f8fcf"/>
<path d="M22 2 V12.5 M26 2 V12.5 M18 6.8 H30.5 M18 9.6 H30.5" stroke="#6f86b8" stroke-width=".9"/>
<rect x="17.5" y="19.5" width="13" height="12" fill="#fff" stroke="#485f92"/><rect x="18" y="20" width="12" height="2.5" fill="#6f8fcf"/>
<path d="M22 20 V31.5 M26 20 V31.5 M18 25 H30.5 M18 28 H30.5" stroke="#6f86b8" stroke-width=".9"/>
</svg>
</body></html>
